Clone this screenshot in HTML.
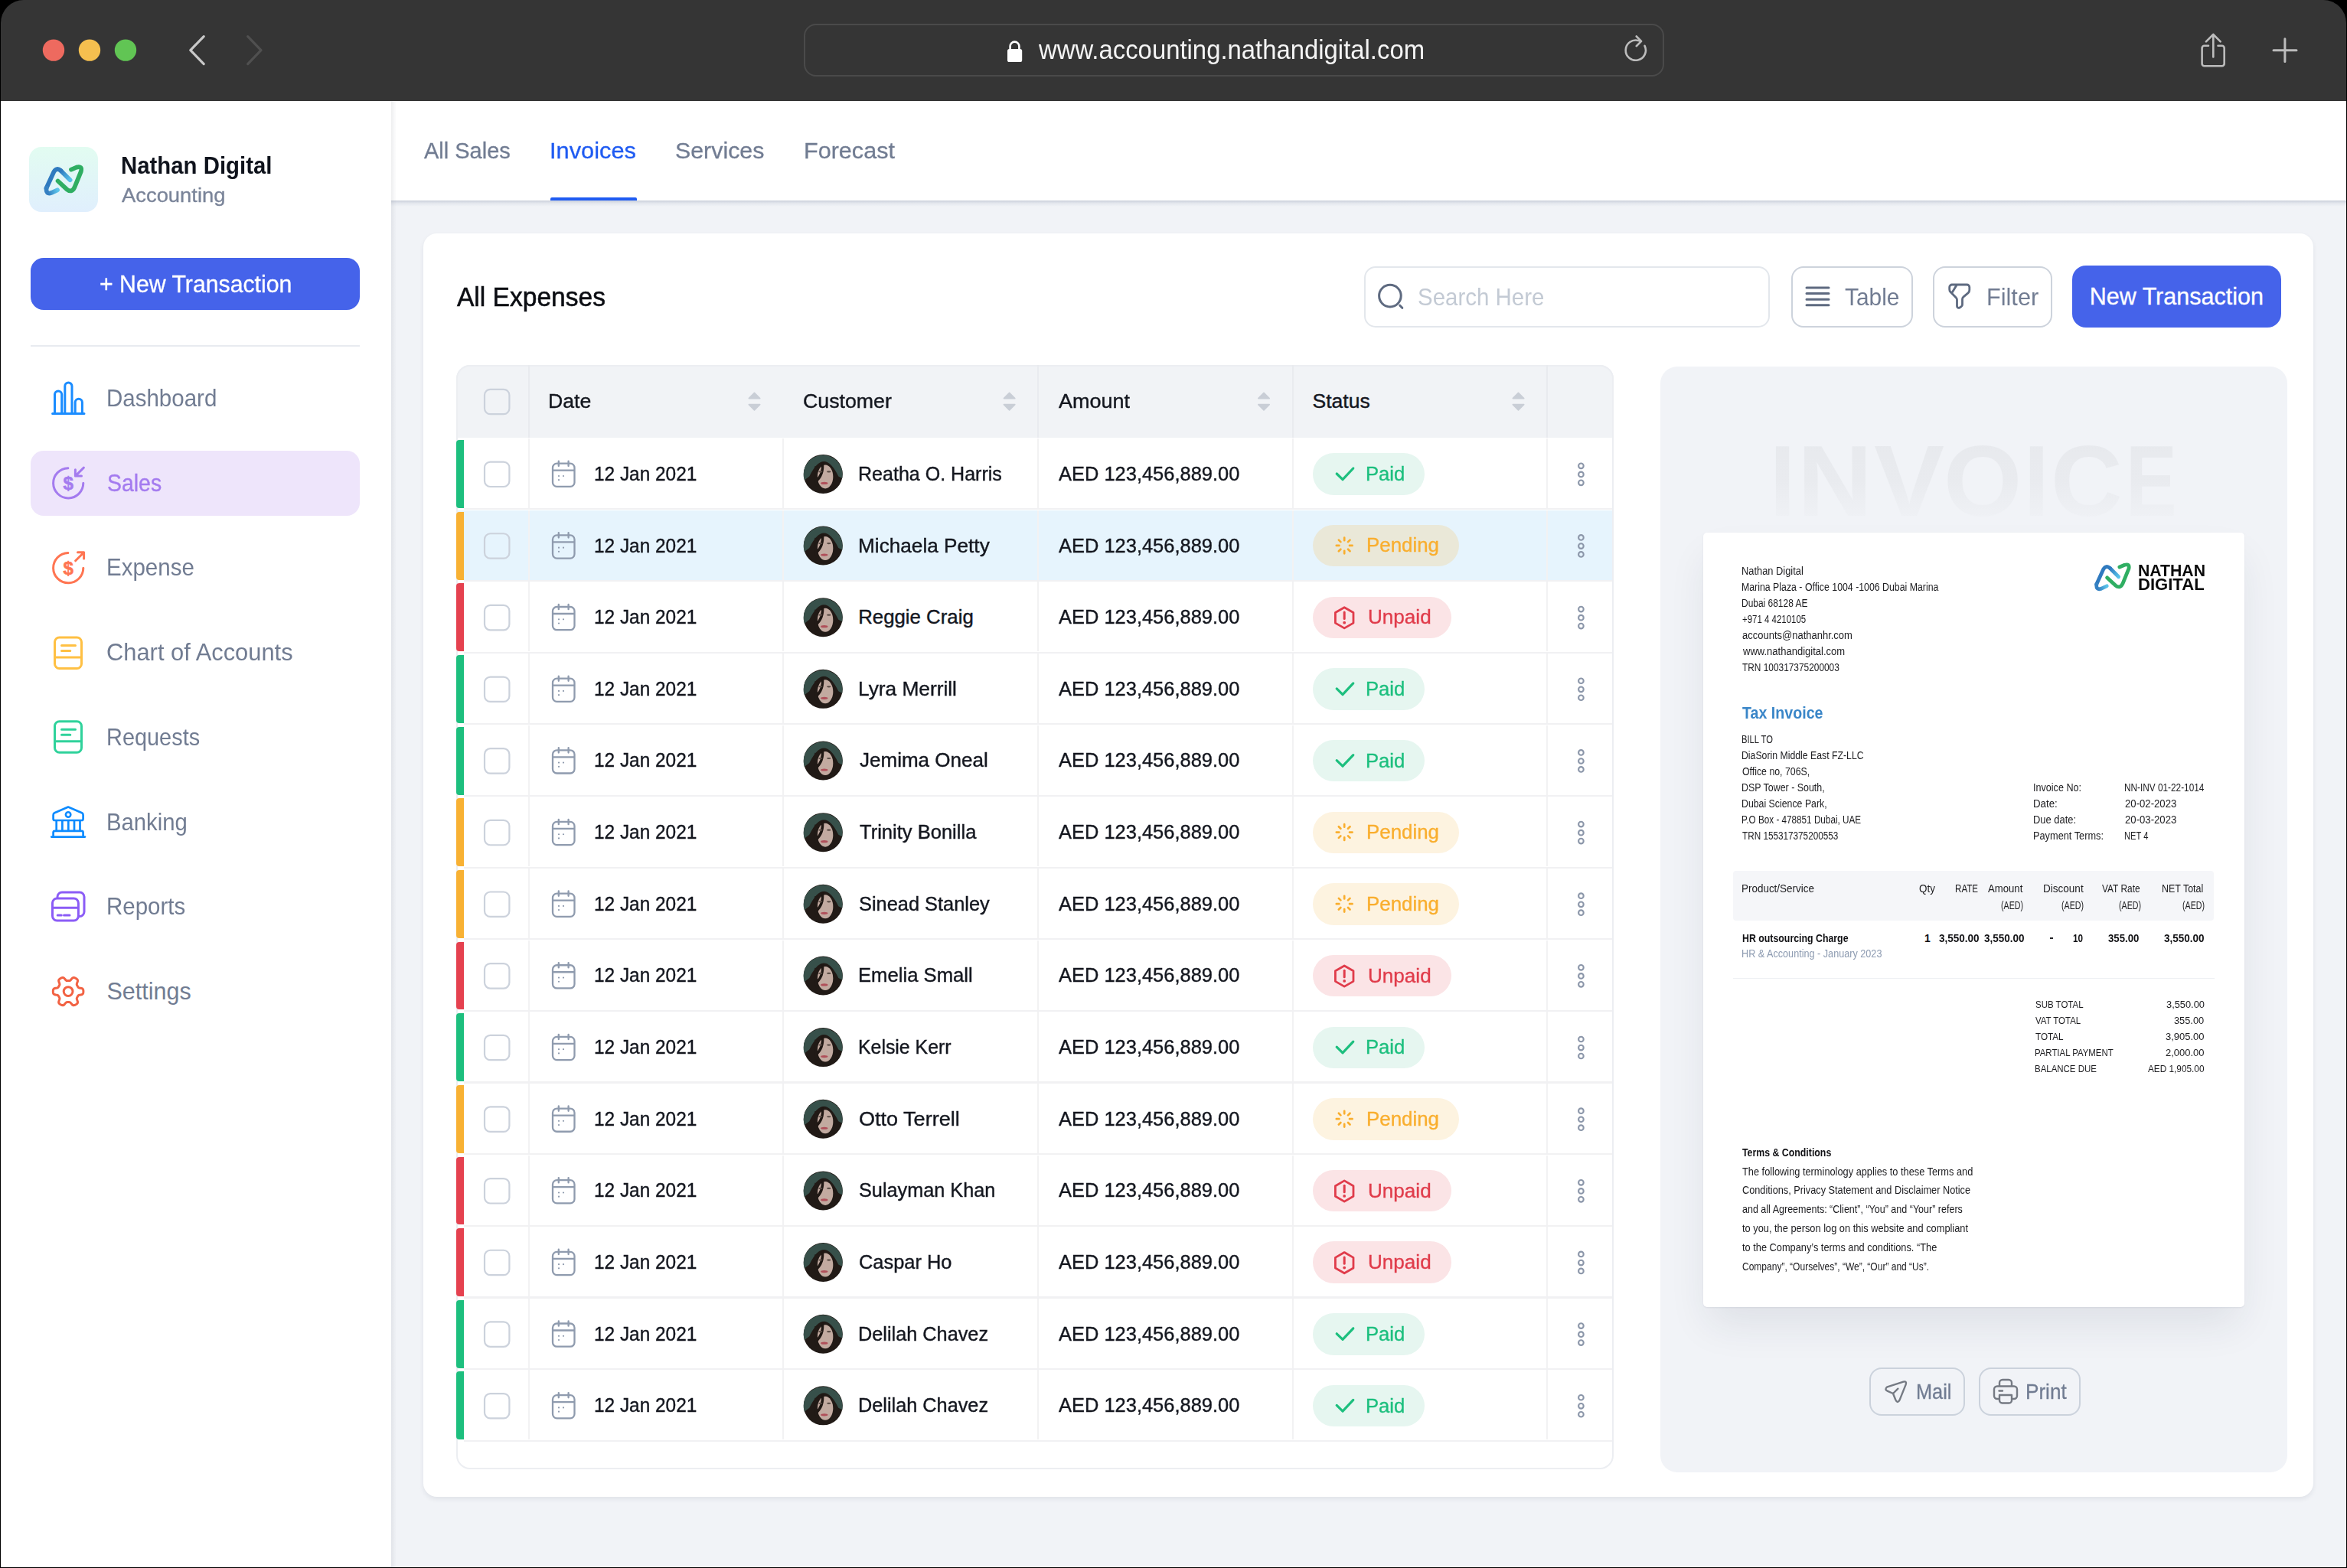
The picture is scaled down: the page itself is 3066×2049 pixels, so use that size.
<!DOCTYPE html><html><head><meta charset="utf-8"><style>
*{margin:0;padding:0;box-sizing:border-box}
html,body{width:3066px;height:2049px;overflow:hidden;background:#000}
body{position:relative;font-family:'Liberation Sans',sans-serif}
.t{position:absolute;white-space:nowrap;line-height:1;transform-origin:0 0}
</style></head><body><div style="position:absolute;left:1.00px;top:0.00px;width:3064.00px;height:132.00px;background:#353535;border-radius:30px 30px 0 0"></div><div style="position:absolute;left:1.00px;top:132.00px;width:3064.00px;height:1916.00px;background:#f1f3f7"></div><div style="position:absolute;left:1050.00px;top:31.00px;width:1124.00px;height:69.00px;border:2px solid #4a4a4a;border-radius:16px"></div><div class="t" style="left:1357.44px;top:46.95px;font-size:35.00px;color:#f4f4f4;font-weight:400;transform:scaleX(0.9387);">www.accounting.nathandigital.com</div><div style="position:absolute;left:1.00px;top:132.00px;width:510.00px;height:1916.00px;background:#fff"></div><div style="position:absolute;left:38.00px;top:192.00px;width:90.00px;height:85.00px;border-radius:16px;background:linear-gradient(#e2fcf1,#e0effd)"></div><div class="t" style="left:157.62px;top:201.00px;font-size:31.30px;color:#0f131c;font-weight:700;transform:scaleX(0.9385);">Nathan Digital</div><div class="t" style="left:158.50px;top:243.07px;font-size:25.80px;color:#7a8499;font-weight:400;transform:scaleX(1.0611);-webkit-text-stroke:0.30px #7a8499;">Accounting</div><div style="position:absolute;left:40.00px;top:337.00px;width:430.00px;height:68.00px;background:#4563ea;border-radius:17px"></div><div class="t" style="left:130.01px;top:355.57px;font-size:30.50px;color:#ffffff;font-weight:400;transform:scaleX(0.9919);-webkit-text-stroke:0.30px #ffffff;">+ New Transaction</div><div style="position:absolute;left:40.00px;top:450.50px;width:430.00px;height:2.00px;background:#e8ebf0"></div><div style="position:absolute;left:40.00px;top:589.00px;width:430.00px;height:85.00px;background:#eee5fb;border-radius:17px"></div><div class="t" style="left:138.57px;top:505.07px;font-size:30.50px;color:#717c92;font-weight:400;transform:scaleX(0.9673);">Dashboard</div><div class="t" style="left:139.57px;top:615.58px;font-size:30.50px;color:#a47bef;font-weight:400;transform:scaleX(0.9328);-webkit-text-stroke:0.35px #a47bef;">Sales</div><div class="t" style="left:138.56px;top:726.08px;font-size:30.50px;color:#717c92;font-weight:400;transform:scaleX(0.9678);">Expense</div><div class="t" style="left:139.49px;top:837.08px;font-size:30.50px;color:#717c92;font-weight:400;transform:scaleX(1.0117);">Chart of Accounts</div><div class="t" style="left:138.60px;top:948.08px;font-size:30.50px;color:#717c92;font-weight:400;transform:scaleX(0.9479);">Requests</div><div class="t" style="left:138.58px;top:1058.58px;font-size:30.50px;color:#717c92;font-weight:400;transform:scaleX(0.9599);">Banking</div><div class="t" style="left:138.57px;top:1169.08px;font-size:30.50px;color:#717c92;font-weight:400;transform:scaleX(0.9661);">Reports</div><div class="t" style="left:139.50px;top:1280.08px;font-size:30.50px;color:#717c92;font-weight:400;">Settings</div><div style="position:absolute;left:511.00px;top:132.00px;width:2554.00px;height:130.00px;background:#fff"></div><div style="position:absolute;left:511.00px;top:262.00px;width:2554.00px;height:8.00px;background:linear-gradient(rgba(150,160,180,0.42),rgba(150,160,180,0.12) 50%,rgba(150,160,180,0))"></div><div style="position:absolute;left:511.00px;top:132.00px;width:7.00px;height:1916.00px;background:linear-gradient(to right,rgba(120,125,140,0.13),rgba(120,125,140,0))"></div><div class="t" style="left:554.00px;top:182.14px;font-size:29.60px;color:#717c92;font-weight:400;transform:scaleX(0.9795);-webkit-text-stroke:0.30px #717c92;">All Sales</div><div class="t" style="left:718.42px;top:182.14px;font-size:29.60px;color:#1f5bf2;font-weight:400;transform:scaleX(1.0400);-webkit-text-stroke:0.30px #1f5bf2;">Invoices</div><div class="t" style="left:882.47px;top:182.14px;font-size:29.60px;color:#717c92;font-weight:400;transform:scaleX(1.0253);-webkit-text-stroke:0.30px #717c92;">Services</div><div class="t" style="left:1049.93px;top:182.14px;font-size:29.60px;color:#717c92;font-weight:400;transform:scaleX(1.0328);-webkit-text-stroke:0.30px #717c92;">Forecast</div><div style="position:absolute;left:719.00px;top:257.50px;width:113.00px;height:4.50px;background:#1f5bf2;border-radius:2px 2px 0 0"></div><div style="position:absolute;left:553.00px;top:305.00px;width:2469.00px;height:1651.00px;background:#fff;border-radius:18px;box-shadow:0 3px 6px rgba(30,40,60,0.08)"></div><div class="t" style="left:597.00px;top:371.38px;font-size:34.50px;color:#0b0d12;font-weight:400;transform:scaleX(0.9723);-webkit-text-stroke:0.55px #0b0d12;">All Expenses</div><div style="position:absolute;left:1782.00px;top:347.50px;width:530.00px;height:80.00px;border:2px solid #e3e7ec;border-radius:15px"></div><div class="t" style="left:1851.63px;top:373.07px;font-size:30.50px;color:#c3cad4;font-weight:400;transform:scaleX(0.9660);">Search Here</div><div style="position:absolute;left:2339.50px;top:347.50px;width:159.00px;height:80.00px;border:2px solid #cdd3dc;border-radius:16px"></div><div class="t" style="left:2410.00px;top:373.07px;font-size:30.50px;color:#717c92;font-weight:400;transform:scaleX(0.9798);">Table</div><div style="position:absolute;left:2525.00px;top:347.50px;width:156.00px;height:80.00px;border:2px solid #cdd3dc;border-radius:16px"></div><div class="t" style="left:2594.99px;top:373.07px;font-size:30.50px;color:#717c92;font-weight:400;transform:scaleX(1.0058);">Filter</div><div style="position:absolute;left:2707.00px;top:347.00px;width:273.00px;height:81.00px;background:#4563ea;border-radius:18px"></div><div class="t" style="left:2729.70px;top:372.07px;font-size:30.50px;color:#fff;font-weight:400;-webkit-text-stroke:0.30px #fff;">New Transaction</div><div style="position:absolute;left:596.00px;top:477.00px;width:1512.00px;height:1443.00px;border:2px solid #eceef2;border-radius:18px;background:#fff;overflow:hidden"></div><div style="position:absolute;left:596.00px;top:477.00px;width:1512.00px;height:95.40px;background:#f1f3f6;border-radius:18px 18px 0 0;border:2px solid #eceef2;border-bottom:none"></div><div class="t" style="left:716.39px;top:511.27px;font-size:26.50px;color:#14171f;font-weight:400;transform:scaleX(1.0049);-webkit-text-stroke:0.40px #14171f;">Date</div><div class="t" style="left:1049.49px;top:511.27px;font-size:26.50px;color:#14171f;font-weight:400;transform:scaleX(1.0084);-webkit-text-stroke:0.40px #14171f;">Customer</div><div class="t" style="left:1382.50px;top:511.27px;font-size:26.50px;color:#14171f;font-weight:400;transform:scaleX(1.0189);-webkit-text-stroke:0.40px #14171f;">Amount</div><div class="t" style="left:1714.50px;top:511.27px;font-size:26.50px;color:#14171f;font-weight:400;-webkit-text-stroke:0.40px #14171f;">Status</div><div style="position:absolute;left:689.50px;top:477.00px;width:2.00px;height:95.40px;background:#e9ebef"></div><div style="position:absolute;left:1354.80px;top:477.00px;width:2.00px;height:95.40px;background:#e9ebef"></div><div style="position:absolute;left:1687.50px;top:477.00px;width:2.00px;height:95.40px;background:#e9ebef"></div><div style="position:absolute;left:2020.00px;top:477.00px;width:2.00px;height:95.40px;background:#e9ebef"></div><div style="position:absolute;left:596.00px;top:575.00px;width:10.30px;height:88.95px;background:#1dbf7e;border-radius:4px 0 0 4px"></div><div style="position:absolute;left:606.00px;top:664.25px;width:1500.00px;height:2.20px;background:#f1f1f3"></div><div style="position:absolute;left:689.50px;top:573.00px;width:2.00px;height:91.05px;background:#f2f2f3"></div><div style="position:absolute;left:1022.00px;top:573.00px;width:2.00px;height:91.05px;background:#f2f2f3"></div><div style="position:absolute;left:1354.80px;top:573.00px;width:2.00px;height:91.05px;background:#f2f2f3"></div><div style="position:absolute;left:1687.50px;top:573.00px;width:2.00px;height:91.05px;background:#f2f2f3"></div><div style="position:absolute;left:2020.00px;top:573.00px;width:2.00px;height:91.05px;background:#f2f2f3"></div><div class="t" style="left:776.45px;top:606.87px;font-size:25.80px;color:#14171f;font-weight:400;transform:scaleX(0.9455);-webkit-text-stroke:0.40px #14171f;">12 Jan 2021</div><div class="t" style="left:1121.26px;top:606.87px;font-size:25.80px;color:#14171f;font-weight:400;transform:scaleX(0.9704);-webkit-text-stroke:0.40px #14171f;">Reatha O. Harris</div><div class="t" style="left:1382.50px;top:606.87px;font-size:25.80px;color:#14171f;font-weight:400;transform:scaleX(0.9867);-webkit-text-stroke:0.40px #14171f;">AED 123,456,889.00</div><div style="position:absolute;left:1715.00px;top:592.30px;width:145.50px;height:54.50px;background:#e6f6f0;border-radius:28px"></div><div class="t" style="left:1784.31px;top:607.07px;font-size:25.80px;color:#1dbf7e;font-weight:400;transform:scaleX(0.9941);-webkit-text-stroke:0.35px #1dbf7e;">Paid</div><div style="position:absolute;left:598.00px;top:666.65px;width:1508.00px;height:91.05px;background:#e6f4fd"></div><div style="position:absolute;left:596.00px;top:668.65px;width:10.30px;height:88.95px;background:#f8b133;border-radius:4px 0 0 4px"></div><div style="position:absolute;left:606.00px;top:757.90px;width:1500.00px;height:2.20px;background:#f1f1f3"></div><div style="position:absolute;left:689.50px;top:666.65px;width:2.00px;height:91.05px;background:#f2f2f3"></div><div style="position:absolute;left:1022.00px;top:666.65px;width:2.00px;height:91.05px;background:#f2f2f3"></div><div style="position:absolute;left:1354.80px;top:666.65px;width:2.00px;height:91.05px;background:#f2f2f3"></div><div style="position:absolute;left:1687.50px;top:666.65px;width:2.00px;height:91.05px;background:#f2f2f3"></div><div style="position:absolute;left:2020.00px;top:666.65px;width:2.00px;height:91.05px;background:#f2f2f3"></div><div class="t" style="left:776.45px;top:700.52px;font-size:25.80px;color:#14171f;font-weight:400;transform:scaleX(0.9455);-webkit-text-stroke:0.40px #14171f;">12 Jan 2021</div><div class="t" style="left:1121.17px;top:700.52px;font-size:25.80px;color:#14171f;font-weight:400;transform:scaleX(1.0150);-webkit-text-stroke:0.40px #14171f;">Michaela Petty</div><div class="t" style="left:1382.50px;top:700.52px;font-size:25.80px;color:#14171f;font-weight:400;transform:scaleX(0.9867);-webkit-text-stroke:0.40px #14171f;">AED 123,456,889.00</div><div style="position:absolute;left:1715.00px;top:685.95px;width:190.50px;height:54.50px;background:#eae8d8;border-radius:28px"></div><div class="t" style="left:1784.89px;top:700.32px;font-size:25.80px;color:#f9ae2e;font-weight:400;transform:scaleX(1.0030);-webkit-text-stroke:0.35px #f9ae2e;">Pending</div><div style="position:absolute;left:596.00px;top:762.30px;width:10.30px;height:88.95px;background:#e5414f;border-radius:4px 0 0 4px"></div><div style="position:absolute;left:606.00px;top:851.55px;width:1500.00px;height:2.20px;background:#f1f1f3"></div><div style="position:absolute;left:689.50px;top:760.30px;width:2.00px;height:91.05px;background:#f2f2f3"></div><div style="position:absolute;left:1022.00px;top:760.30px;width:2.00px;height:91.05px;background:#f2f2f3"></div><div style="position:absolute;left:1354.80px;top:760.30px;width:2.00px;height:91.05px;background:#f2f2f3"></div><div style="position:absolute;left:1687.50px;top:760.30px;width:2.00px;height:91.05px;background:#f2f2f3"></div><div style="position:absolute;left:2020.00px;top:760.30px;width:2.00px;height:91.05px;background:#f2f2f3"></div><div class="t" style="left:776.45px;top:794.17px;font-size:25.80px;color:#14171f;font-weight:400;transform:scaleX(0.9455);-webkit-text-stroke:0.40px #14171f;">12 Jan 2021</div><div class="t" style="left:1121.20px;top:794.17px;font-size:25.80px;color:#14171f;font-weight:400;-webkit-text-stroke:0.40px #14171f;">Reggie Craig</div><div class="t" style="left:1382.50px;top:794.17px;font-size:25.80px;color:#14171f;font-weight:400;transform:scaleX(0.9867);-webkit-text-stroke:0.40px #14171f;">AED 123,456,889.00</div><div style="position:absolute;left:1715.00px;top:779.60px;width:181.00px;height:54.50px;background:#fbe4e6;border-radius:28px"></div><div class="t" style="left:1786.69px;top:794.37px;font-size:25.80px;color:#e03c4b;font-weight:400;transform:scaleX(1.0113);-webkit-text-stroke:0.35px #e03c4b;">Unpaid</div><div style="position:absolute;left:596.00px;top:855.95px;width:10.30px;height:88.95px;background:#1dbf7e;border-radius:4px 0 0 4px"></div><div style="position:absolute;left:606.00px;top:945.20px;width:1500.00px;height:2.20px;background:#f1f1f3"></div><div style="position:absolute;left:689.50px;top:853.95px;width:2.00px;height:91.05px;background:#f2f2f3"></div><div style="position:absolute;left:1022.00px;top:853.95px;width:2.00px;height:91.05px;background:#f2f2f3"></div><div style="position:absolute;left:1354.80px;top:853.95px;width:2.00px;height:91.05px;background:#f2f2f3"></div><div style="position:absolute;left:1687.50px;top:853.95px;width:2.00px;height:91.05px;background:#f2f2f3"></div><div style="position:absolute;left:2020.00px;top:853.95px;width:2.00px;height:91.05px;background:#f2f2f3"></div><div class="t" style="left:776.45px;top:887.82px;font-size:25.80px;color:#14171f;font-weight:400;transform:scaleX(0.9455);-webkit-text-stroke:0.40px #14171f;">12 Jan 2021</div><div class="t" style="left:1121.16px;top:887.82px;font-size:25.80px;color:#14171f;font-weight:400;transform:scaleX(1.0181);-webkit-text-stroke:0.40px #14171f;">Lyra Merrill</div><div class="t" style="left:1382.50px;top:887.82px;font-size:25.80px;color:#14171f;font-weight:400;transform:scaleX(0.9867);-webkit-text-stroke:0.40px #14171f;">AED 123,456,889.00</div><div style="position:absolute;left:1715.00px;top:873.25px;width:145.50px;height:54.50px;background:#e6f6f0;border-radius:28px"></div><div class="t" style="left:1784.31px;top:888.02px;font-size:25.80px;color:#1dbf7e;font-weight:400;transform:scaleX(0.9941);-webkit-text-stroke:0.35px #1dbf7e;">Paid</div><div style="position:absolute;left:596.00px;top:949.60px;width:10.30px;height:88.95px;background:#1dbf7e;border-radius:4px 0 0 4px"></div><div style="position:absolute;left:606.00px;top:1038.85px;width:1500.00px;height:2.20px;background:#f1f1f3"></div><div style="position:absolute;left:689.50px;top:947.60px;width:2.00px;height:91.05px;background:#f2f2f3"></div><div style="position:absolute;left:1022.00px;top:947.60px;width:2.00px;height:91.05px;background:#f2f2f3"></div><div style="position:absolute;left:1354.80px;top:947.60px;width:2.00px;height:91.05px;background:#f2f2f3"></div><div style="position:absolute;left:1687.50px;top:947.60px;width:2.00px;height:91.05px;background:#f2f2f3"></div><div style="position:absolute;left:2020.00px;top:947.60px;width:2.00px;height:91.05px;background:#f2f2f3"></div><div class="t" style="left:776.45px;top:981.47px;font-size:25.80px;color:#14171f;font-weight:400;transform:scaleX(0.9455);-webkit-text-stroke:0.40px #14171f;">12 Jan 2021</div><div class="t" style="left:1123.20px;top:981.47px;font-size:25.80px;color:#14171f;font-weight:400;transform:scaleX(1.0087);-webkit-text-stroke:0.40px #14171f;">Jemima Oneal</div><div class="t" style="left:1382.50px;top:981.47px;font-size:25.80px;color:#14171f;font-weight:400;transform:scaleX(0.9867);-webkit-text-stroke:0.40px #14171f;">AED 123,456,889.00</div><div style="position:absolute;left:1715.00px;top:966.90px;width:145.50px;height:54.50px;background:#e6f6f0;border-radius:28px"></div><div class="t" style="left:1784.31px;top:981.67px;font-size:25.80px;color:#1dbf7e;font-weight:400;transform:scaleX(0.9941);-webkit-text-stroke:0.35px #1dbf7e;">Paid</div><div style="position:absolute;left:596.00px;top:1043.25px;width:10.30px;height:88.95px;background:#f8b133;border-radius:4px 0 0 4px"></div><div style="position:absolute;left:606.00px;top:1132.50px;width:1500.00px;height:2.20px;background:#f1f1f3"></div><div style="position:absolute;left:689.50px;top:1041.25px;width:2.00px;height:91.05px;background:#f2f2f3"></div><div style="position:absolute;left:1022.00px;top:1041.25px;width:2.00px;height:91.05px;background:#f2f2f3"></div><div style="position:absolute;left:1354.80px;top:1041.25px;width:2.00px;height:91.05px;background:#f2f2f3"></div><div style="position:absolute;left:1687.50px;top:1041.25px;width:2.00px;height:91.05px;background:#f2f2f3"></div><div style="position:absolute;left:2020.00px;top:1041.25px;width:2.00px;height:91.05px;background:#f2f2f3"></div><div class="t" style="left:776.45px;top:1075.12px;font-size:25.80px;color:#14171f;font-weight:400;transform:scaleX(0.9455);-webkit-text-stroke:0.40px #14171f;">12 Jan 2021</div><div class="t" style="left:1123.20px;top:1075.12px;font-size:25.80px;color:#14171f;font-weight:400;transform:scaleX(0.9901);-webkit-text-stroke:0.40px #14171f;">Trinity Bonilla</div><div class="t" style="left:1382.50px;top:1075.12px;font-size:25.80px;color:#14171f;font-weight:400;transform:scaleX(0.9867);-webkit-text-stroke:0.40px #14171f;">AED 123,456,889.00</div><div style="position:absolute;left:1715.00px;top:1060.55px;width:190.50px;height:54.50px;background:#fdf3e0;border-radius:28px"></div><div class="t" style="left:1784.89px;top:1074.92px;font-size:25.80px;color:#f9ae2e;font-weight:400;transform:scaleX(1.0030);-webkit-text-stroke:0.35px #f9ae2e;">Pending</div><div style="position:absolute;left:596.00px;top:1136.90px;width:10.30px;height:88.95px;background:#f8b133;border-radius:4px 0 0 4px"></div><div style="position:absolute;left:606.00px;top:1226.15px;width:1500.00px;height:2.20px;background:#f1f1f3"></div><div style="position:absolute;left:689.50px;top:1134.90px;width:2.00px;height:91.05px;background:#f2f2f3"></div><div style="position:absolute;left:1022.00px;top:1134.90px;width:2.00px;height:91.05px;background:#f2f2f3"></div><div style="position:absolute;left:1354.80px;top:1134.90px;width:2.00px;height:91.05px;background:#f2f2f3"></div><div style="position:absolute;left:1687.50px;top:1134.90px;width:2.00px;height:91.05px;background:#f2f2f3"></div><div style="position:absolute;left:2020.00px;top:1134.90px;width:2.00px;height:91.05px;background:#f2f2f3"></div><div class="t" style="left:776.45px;top:1168.77px;font-size:25.80px;color:#14171f;font-weight:400;transform:scaleX(0.9455);-webkit-text-stroke:0.40px #14171f;">12 Jan 2021</div><div class="t" style="left:1122.22px;top:1168.77px;font-size:25.80px;color:#14171f;font-weight:400;transform:scaleX(0.9836);-webkit-text-stroke:0.40px #14171f;">Sinead Stanley</div><div class="t" style="left:1382.50px;top:1168.77px;font-size:25.80px;color:#14171f;font-weight:400;transform:scaleX(0.9867);-webkit-text-stroke:0.40px #14171f;">AED 123,456,889.00</div><div style="position:absolute;left:1715.00px;top:1154.20px;width:190.50px;height:54.50px;background:#fdf3e0;border-radius:28px"></div><div class="t" style="left:1784.89px;top:1168.57px;font-size:25.80px;color:#f9ae2e;font-weight:400;transform:scaleX(1.0030);-webkit-text-stroke:0.35px #f9ae2e;">Pending</div><div style="position:absolute;left:596.00px;top:1230.55px;width:10.30px;height:88.95px;background:#e5414f;border-radius:4px 0 0 4px"></div><div style="position:absolute;left:606.00px;top:1319.80px;width:1500.00px;height:2.20px;background:#f1f1f3"></div><div style="position:absolute;left:689.50px;top:1228.55px;width:2.00px;height:91.05px;background:#f2f2f3"></div><div style="position:absolute;left:1022.00px;top:1228.55px;width:2.00px;height:91.05px;background:#f2f2f3"></div><div style="position:absolute;left:1354.80px;top:1228.55px;width:2.00px;height:91.05px;background:#f2f2f3"></div><div style="position:absolute;left:1687.50px;top:1228.55px;width:2.00px;height:91.05px;background:#f2f2f3"></div><div style="position:absolute;left:2020.00px;top:1228.55px;width:2.00px;height:91.05px;background:#f2f2f3"></div><div class="t" style="left:776.45px;top:1262.42px;font-size:25.80px;color:#14171f;font-weight:400;transform:scaleX(0.9455);-webkit-text-stroke:0.40px #14171f;">12 Jan 2021</div><div class="t" style="left:1121.21px;top:1262.42px;font-size:25.80px;color:#14171f;font-weight:400;transform:scaleX(0.9946);-webkit-text-stroke:0.40px #14171f;">Emelia Small</div><div class="t" style="left:1382.50px;top:1262.42px;font-size:25.80px;color:#14171f;font-weight:400;transform:scaleX(0.9867);-webkit-text-stroke:0.40px #14171f;">AED 123,456,889.00</div><div style="position:absolute;left:1715.00px;top:1247.85px;width:181.00px;height:54.50px;background:#fbe4e6;border-radius:28px"></div><div class="t" style="left:1786.69px;top:1262.62px;font-size:25.80px;color:#e03c4b;font-weight:400;transform:scaleX(1.0113);-webkit-text-stroke:0.35px #e03c4b;">Unpaid</div><div style="position:absolute;left:596.00px;top:1324.20px;width:10.30px;height:88.95px;background:#1dbf7e;border-radius:4px 0 0 4px"></div><div style="position:absolute;left:606.00px;top:1413.45px;width:1500.00px;height:2.20px;background:#f1f1f3"></div><div style="position:absolute;left:689.50px;top:1322.20px;width:2.00px;height:91.05px;background:#f2f2f3"></div><div style="position:absolute;left:1022.00px;top:1322.20px;width:2.00px;height:91.05px;background:#f2f2f3"></div><div style="position:absolute;left:1354.80px;top:1322.20px;width:2.00px;height:91.05px;background:#f2f2f3"></div><div style="position:absolute;left:1687.50px;top:1322.20px;width:2.00px;height:91.05px;background:#f2f2f3"></div><div style="position:absolute;left:2020.00px;top:1322.20px;width:2.00px;height:91.05px;background:#f2f2f3"></div><div class="t" style="left:776.45px;top:1356.07px;font-size:25.80px;color:#14171f;font-weight:400;transform:scaleX(0.9455);-webkit-text-stroke:0.40px #14171f;">12 Jan 2021</div><div class="t" style="left:1121.27px;top:1356.07px;font-size:25.80px;color:#14171f;font-weight:400;transform:scaleX(0.9633);-webkit-text-stroke:0.40px #14171f;">Kelsie Kerr</div><div class="t" style="left:1382.50px;top:1356.07px;font-size:25.80px;color:#14171f;font-weight:400;transform:scaleX(0.9867);-webkit-text-stroke:0.40px #14171f;">AED 123,456,889.00</div><div style="position:absolute;left:1715.00px;top:1341.50px;width:145.50px;height:54.50px;background:#e6f6f0;border-radius:28px"></div><div class="t" style="left:1784.31px;top:1356.27px;font-size:25.80px;color:#1dbf7e;font-weight:400;transform:scaleX(0.9941);-webkit-text-stroke:0.35px #1dbf7e;">Paid</div><div style="position:absolute;left:596.00px;top:1417.85px;width:10.30px;height:88.95px;background:#f8b133;border-radius:4px 0 0 4px"></div><div style="position:absolute;left:606.00px;top:1507.10px;width:1500.00px;height:2.20px;background:#f1f1f3"></div><div style="position:absolute;left:689.50px;top:1415.85px;width:2.00px;height:91.05px;background:#f2f2f3"></div><div style="position:absolute;left:1022.00px;top:1415.85px;width:2.00px;height:91.05px;background:#f2f2f3"></div><div style="position:absolute;left:1354.80px;top:1415.85px;width:2.00px;height:91.05px;background:#f2f2f3"></div><div style="position:absolute;left:1687.50px;top:1415.85px;width:2.00px;height:91.05px;background:#f2f2f3"></div><div style="position:absolute;left:2020.00px;top:1415.85px;width:2.00px;height:91.05px;background:#f2f2f3"></div><div class="t" style="left:776.45px;top:1449.72px;font-size:25.80px;color:#14171f;font-weight:400;transform:scaleX(0.9455);-webkit-text-stroke:0.40px #14171f;">12 Jan 2021</div><div class="t" style="left:1122.15px;top:1449.72px;font-size:25.80px;color:#14171f;font-weight:400;transform:scaleX(1.0477);-webkit-text-stroke:0.40px #14171f;">Otto Terrell</div><div class="t" style="left:1382.50px;top:1449.72px;font-size:25.80px;color:#14171f;font-weight:400;transform:scaleX(0.9867);-webkit-text-stroke:0.40px #14171f;">AED 123,456,889.00</div><div style="position:absolute;left:1715.00px;top:1435.15px;width:190.50px;height:54.50px;background:#fdf3e0;border-radius:28px"></div><div class="t" style="left:1784.89px;top:1449.52px;font-size:25.80px;color:#f9ae2e;font-weight:400;transform:scaleX(1.0030);-webkit-text-stroke:0.35px #f9ae2e;">Pending</div><div style="position:absolute;left:596.00px;top:1511.50px;width:10.30px;height:88.95px;background:#e5414f;border-radius:4px 0 0 4px"></div><div style="position:absolute;left:606.00px;top:1600.75px;width:1500.00px;height:2.20px;background:#f1f1f3"></div><div style="position:absolute;left:689.50px;top:1509.50px;width:2.00px;height:91.05px;background:#f2f2f3"></div><div style="position:absolute;left:1022.00px;top:1509.50px;width:2.00px;height:91.05px;background:#f2f2f3"></div><div style="position:absolute;left:1354.80px;top:1509.50px;width:2.00px;height:91.05px;background:#f2f2f3"></div><div style="position:absolute;left:1687.50px;top:1509.50px;width:2.00px;height:91.05px;background:#f2f2f3"></div><div style="position:absolute;left:2020.00px;top:1509.50px;width:2.00px;height:91.05px;background:#f2f2f3"></div><div class="t" style="left:776.45px;top:1543.37px;font-size:25.80px;color:#14171f;font-weight:400;transform:scaleX(0.9455);-webkit-text-stroke:0.40px #14171f;">12 Jan 2021</div><div class="t" style="left:1122.22px;top:1543.37px;font-size:25.80px;color:#14171f;font-weight:400;transform:scaleX(0.9790);-webkit-text-stroke:0.40px #14171f;">Sulayman Khan</div><div class="t" style="left:1382.50px;top:1543.37px;font-size:25.80px;color:#14171f;font-weight:400;transform:scaleX(0.9867);-webkit-text-stroke:0.40px #14171f;">AED 123,456,889.00</div><div style="position:absolute;left:1715.00px;top:1528.80px;width:181.00px;height:54.50px;background:#fbe4e6;border-radius:28px"></div><div class="t" style="left:1786.69px;top:1543.57px;font-size:25.80px;color:#e03c4b;font-weight:400;transform:scaleX(1.0113);-webkit-text-stroke:0.35px #e03c4b;">Unpaid</div><div style="position:absolute;left:596.00px;top:1605.15px;width:10.30px;height:88.95px;background:#e5414f;border-radius:4px 0 0 4px"></div><div style="position:absolute;left:606.00px;top:1694.40px;width:1500.00px;height:2.20px;background:#f1f1f3"></div><div style="position:absolute;left:689.50px;top:1603.15px;width:2.00px;height:91.05px;background:#f2f2f3"></div><div style="position:absolute;left:1022.00px;top:1603.15px;width:2.00px;height:91.05px;background:#f2f2f3"></div><div style="position:absolute;left:1354.80px;top:1603.15px;width:2.00px;height:91.05px;background:#f2f2f3"></div><div style="position:absolute;left:1687.50px;top:1603.15px;width:2.00px;height:91.05px;background:#f2f2f3"></div><div style="position:absolute;left:2020.00px;top:1603.15px;width:2.00px;height:91.05px;background:#f2f2f3"></div><div class="t" style="left:776.45px;top:1637.02px;font-size:25.80px;color:#14171f;font-weight:400;transform:scaleX(0.9455);-webkit-text-stroke:0.40px #14171f;">12 Jan 2021</div><div class="t" style="left:1122.22px;top:1637.02px;font-size:25.80px;color:#14171f;font-weight:400;transform:scaleX(0.9840);-webkit-text-stroke:0.40px #14171f;">Caspar Ho</div><div class="t" style="left:1382.50px;top:1637.02px;font-size:25.80px;color:#14171f;font-weight:400;transform:scaleX(0.9867);-webkit-text-stroke:0.40px #14171f;">AED 123,456,889.00</div><div style="position:absolute;left:1715.00px;top:1622.45px;width:181.00px;height:54.50px;background:#fbe4e6;border-radius:28px"></div><div class="t" style="left:1786.69px;top:1637.22px;font-size:25.80px;color:#e03c4b;font-weight:400;transform:scaleX(1.0113);-webkit-text-stroke:0.35px #e03c4b;">Unpaid</div><div style="position:absolute;left:596.00px;top:1698.80px;width:10.30px;height:88.95px;background:#1dbf7e;border-radius:4px 0 0 4px"></div><div style="position:absolute;left:606.00px;top:1788.05px;width:1500.00px;height:2.20px;background:#f1f1f3"></div><div style="position:absolute;left:689.50px;top:1696.80px;width:2.00px;height:91.05px;background:#f2f2f3"></div><div style="position:absolute;left:1022.00px;top:1696.80px;width:2.00px;height:91.05px;background:#f2f2f3"></div><div style="position:absolute;left:1354.80px;top:1696.80px;width:2.00px;height:91.05px;background:#f2f2f3"></div><div style="position:absolute;left:1687.50px;top:1696.80px;width:2.00px;height:91.05px;background:#f2f2f3"></div><div style="position:absolute;left:2020.00px;top:1696.80px;width:2.00px;height:91.05px;background:#f2f2f3"></div><div class="t" style="left:776.45px;top:1730.67px;font-size:25.80px;color:#14171f;font-weight:400;transform:scaleX(0.9455);-webkit-text-stroke:0.40px #14171f;">12 Jan 2021</div><div class="t" style="left:1121.24px;top:1730.67px;font-size:25.80px;color:#14171f;font-weight:400;transform:scaleX(0.9801);-webkit-text-stroke:0.40px #14171f;">Delilah Chavez</div><div class="t" style="left:1382.50px;top:1730.67px;font-size:25.80px;color:#14171f;font-weight:400;transform:scaleX(0.9867);-webkit-text-stroke:0.40px #14171f;">AED 123,456,889.00</div><div style="position:absolute;left:1715.00px;top:1716.10px;width:145.50px;height:54.50px;background:#e6f6f0;border-radius:28px"></div><div class="t" style="left:1784.31px;top:1730.87px;font-size:25.80px;color:#1dbf7e;font-weight:400;transform:scaleX(0.9941);-webkit-text-stroke:0.35px #1dbf7e;">Paid</div><div style="position:absolute;left:596.00px;top:1792.45px;width:10.30px;height:88.95px;background:#1dbf7e;border-radius:4px 0 0 4px"></div><div style="position:absolute;left:606.00px;top:1881.70px;width:1500.00px;height:2.20px;background:#f1f1f3"></div><div style="position:absolute;left:689.50px;top:1790.45px;width:2.00px;height:91.05px;background:#f2f2f3"></div><div style="position:absolute;left:1022.00px;top:1790.45px;width:2.00px;height:91.05px;background:#f2f2f3"></div><div style="position:absolute;left:1354.80px;top:1790.45px;width:2.00px;height:91.05px;background:#f2f2f3"></div><div style="position:absolute;left:1687.50px;top:1790.45px;width:2.00px;height:91.05px;background:#f2f2f3"></div><div style="position:absolute;left:2020.00px;top:1790.45px;width:2.00px;height:91.05px;background:#f2f2f3"></div><div class="t" style="left:776.45px;top:1824.32px;font-size:25.80px;color:#14171f;font-weight:400;transform:scaleX(0.9455);-webkit-text-stroke:0.40px #14171f;">12 Jan 2021</div><div class="t" style="left:1121.24px;top:1824.32px;font-size:25.80px;color:#14171f;font-weight:400;transform:scaleX(0.9801);-webkit-text-stroke:0.40px #14171f;">Delilah Chavez</div><div class="t" style="left:1382.50px;top:1824.32px;font-size:25.80px;color:#14171f;font-weight:400;transform:scaleX(0.9867);-webkit-text-stroke:0.40px #14171f;">AED 123,456,889.00</div><div style="position:absolute;left:1715.00px;top:1809.75px;width:145.50px;height:54.50px;background:#e6f6f0;border-radius:28px"></div><div class="t" style="left:1784.31px;top:1824.52px;font-size:25.80px;color:#1dbf7e;font-weight:400;transform:scaleX(0.9941);-webkit-text-stroke:0.35px #1dbf7e;">Paid</div><div style="position:absolute;left:2169.00px;top:479.00px;width:819.00px;height:1445.00px;background:#f1f3f7;border-radius:22px"></div><div class="t" style="left:2311.70px;top:562.38px;font-size:132.50px;color:#e6e8ec;font-weight:700;transform:scaleX(0.9000);background:linear-gradient(#e7e9ed 0%,#e9ebef 50%,#f0f2f6 92%);-webkit-background-clip:text;background-clip:text;-webkit-text-fill-color:transparent;">I</div><div class="t" style="left:2348.11px;top:562.38px;font-size:132.50px;color:#e6e8ec;font-weight:700;transform:scaleX(1.0241);background:linear-gradient(#e7e9ed 0%,#e9ebef 50%,#f0f2f6 92%);-webkit-background-clip:text;background-clip:text;-webkit-text-fill-color:transparent;">N</div><div class="t" style="left:2448.10px;top:562.38px;font-size:132.50px;color:#e6e8ec;font-weight:700;transform:scaleX(1.0432);background:linear-gradient(#e7e9ed 0%,#e9ebef 50%,#f0f2f6 92%);-webkit-background-clip:text;background-clip:text;-webkit-text-fill-color:transparent;">V</div><div class="t" style="left:2539.04px;top:562.38px;font-size:132.50px;color:#e6e8ec;font-weight:700;transform:scaleX(0.9925);background:linear-gradient(#e7e9ed 0%,#e9ebef 50%,#f0f2f6 92%);-webkit-background-clip:text;background-clip:text;-webkit-text-fill-color:transparent;">O</div><div class="t" style="left:2644.32px;top:562.38px;font-size:132.50px;color:#e6e8ec;font-weight:700;transform:scaleX(0.8850);background:linear-gradient(#e7e9ed 0%,#e9ebef 50%,#f0f2f6 92%);-webkit-background-clip:text;background-clip:text;-webkit-text-fill-color:transparent;">I</div><div class="t" style="left:2678.80px;top:562.38px;font-size:132.50px;color:#e6e8ec;font-weight:700;transform:scaleX(0.9795);background:linear-gradient(#e7e9ed 0%,#e9ebef 50%,#f0f2f6 92%);-webkit-background-clip:text;background-clip:text;-webkit-text-fill-color:transparent;">C</div><div class="t" style="left:2776.75px;top:562.38px;font-size:132.50px;color:#e6e8ec;font-weight:700;transform:scaleX(0.7566);background:linear-gradient(#e7e9ed 0%,#e9ebef 50%,#f0f2f6 92%);-webkit-background-clip:text;background-clip:text;-webkit-text-fill-color:transparent;">E</div><div style="position:absolute;left:2225.00px;top:695.50px;width:707.00px;height:1012.50px;background:#fff;border-radius:5px;box-shadow:0 1px 2px rgba(30,40,80,0.08),0 28px 50px -6px rgba(30,40,70,0.09)"></div><div class="t" style="left:2275.08px;top:738.70px;font-size:14.00px;color:#1c1c1f;font-weight:400;transform:scaleX(0.9191);">Nathan Digital</div><div class="t" style="left:2275.12px;top:759.60px;font-size:14.00px;color:#1c1c1f;font-weight:400;transform:scaleX(0.8805);">Marina Plaza - Office 1004 -1006 Dubai Marina</div><div class="t" style="left:2275.15px;top:780.70px;font-size:14.00px;color:#1c1c1f;font-weight:400;transform:scaleX(0.8536);">Dubai 68128 AE</div><div class="t" style="left:2276.00px;top:802.10px;font-size:14.00px;color:#1c1c1f;font-weight:400;transform:scaleX(0.8191);">+971 4 4210105</div><div class="t" style="left:2276.00px;top:823.10px;font-size:14.00px;color:#1c1c1f;font-weight:400;transform:scaleX(0.9280);">accounts@nathanhr.com</div><div class="t" style="left:2276.93px;top:843.90px;font-size:14.00px;color:#1c1c1f;font-weight:400;transform:scaleX(0.9295);">www.nathandigital.com</div><div class="t" style="left:2276.00px;top:865.10px;font-size:14.00px;color:#1c1c1f;font-weight:400;transform:scaleX(0.8485);">TRN 100317375200003</div><div class="t" style="left:2792.73px;top:735.47px;font-size:21.80px;color:#0a0a0a;font-weight:700;transform:scaleX(0.9734);">NATHAN</div><div class="t" style="left:2792.69px;top:752.87px;font-size:21.80px;color:#0a0a0a;font-weight:700;transform:scaleX(1.0125);">DIGITAL</div><div class="t" style="left:2276.00px;top:921.73px;font-size:21.50px;color:#3a86c8;font-weight:700;transform:scaleX(0.9130);">Tax Invoice</div><div class="t" style="left:2275.20px;top:959.00px;font-size:14.00px;color:#1c1c1f;font-weight:400;transform:scaleX(0.8002);">BILL TO</div><div class="t" style="left:2275.12px;top:979.80px;font-size:14.00px;color:#1c1c1f;font-weight:400;transform:scaleX(0.8765);">DiaSorin Middle East FZ-LLC</div><div class="t" style="left:2276.00px;top:1001.00px;font-size:14.00px;color:#1c1c1f;font-weight:400;transform:scaleX(0.8806);">Office no, 706S,</div><div class="t" style="left:2275.11px;top:1021.80px;font-size:14.00px;color:#1c1c1f;font-weight:400;transform:scaleX(0.8873);">DSP Tower - South,</div><div class="t" style="left:2275.12px;top:1043.00px;font-size:14.00px;color:#1c1c1f;font-weight:400;transform:scaleX(0.8803);">Dubai Science Park,</div><div class="t" style="left:2275.16px;top:1064.10px;font-size:14.00px;color:#1c1c1f;font-weight:400;transform:scaleX(0.8370);">P.O Box - 478851 Dubai, UAE</div><div class="t" style="left:2276.00px;top:1085.10px;font-size:14.00px;color:#1c1c1f;font-weight:400;transform:scaleX(0.8385);">TRN 155317375200553</div><div class="t" style="left:2656.10px;top:1021.80px;font-size:14.00px;color:#1c1c1f;font-weight:400;transform:scaleX(0.8996);">Invoice No:</div><div class="t" style="left:2774.96px;top:1021.80px;font-size:14.00px;color:#1c1c1f;font-weight:400;transform:scaleX(0.8435);">NN-INV 01-22-1014</div><div class="t" style="left:2656.05px;top:1043.00px;font-size:14.00px;color:#1c1c1f;font-weight:400;transform:scaleX(0.9502);">Date:</div><div class="t" style="left:2775.80px;top:1043.00px;font-size:14.00px;color:#1c1c1f;font-weight:400;transform:scaleX(0.9398);">20-02-2023</div><div class="t" style="left:2656.08px;top:1064.10px;font-size:14.00px;color:#1c1c1f;font-weight:400;transform:scaleX(0.9232);">Due date:</div><div class="t" style="left:2775.80px;top:1064.10px;font-size:14.00px;color:#1c1c1f;font-weight:400;transform:scaleX(0.9398);">20-03-2023</div><div class="t" style="left:2656.09px;top:1085.10px;font-size:14.00px;color:#1c1c1f;font-weight:400;transform:scaleX(0.9119);">Payment Terms:</div><div class="t" style="left:2775.00px;top:1085.10px;font-size:14.00px;color:#1c1c1f;font-weight:400;transform:scaleX(0.7971);">NET 4</div><div style="position:absolute;left:2264.00px;top:1138.40px;width:628.00px;height:65.00px;background:#f5f6f9;border-radius:4px"></div><div class="t" style="left:2275.04px;top:1154.10px;font-size:14.00px;color:#1c1c1f;font-weight:400;transform:scaleX(0.9609);">Product/Service</div><div class="t" style="left:2506.80px;top:1154.10px;font-size:14.00px;color:#1c1c1f;font-weight:400;transform:scaleX(0.9596);">Qty</div><div class="t" style="left:2553.67px;top:1154.10px;font-size:14.00px;color:#1c1c1f;font-weight:400;transform:scaleX(0.8295);">RATE</div><div class="t" style="left:2597.30px;top:1154.10px;font-size:14.00px;color:#1c1c1f;font-weight:400;transform:scaleX(0.9388);">Amount</div><div class="t" style="left:2669.03px;top:1154.10px;font-size:14.00px;color:#1c1c1f;font-weight:400;transform:scaleX(0.9668);">Discount</div><div class="t" style="left:2746.00px;top:1154.10px;font-size:14.00px;color:#1c1c1f;font-weight:400;transform:scaleX(0.8500);">VAT Rate</div><div class="t" style="left:2824.41px;top:1154.10px;font-size:14.00px;color:#1c1c1f;font-weight:400;transform:scaleX(0.8898);">NET Total</div><div class="t" style="left:2614.20px;top:1176.10px;font-size:14.00px;color:#1c1c1f;font-weight:400;transform:scaleX(0.7611);">(AED)</div><div class="t" style="left:2693.30px;top:1176.10px;font-size:14.00px;color:#1c1c1f;font-weight:400;transform:scaleX(0.7611);">(AED)</div><div class="t" style="left:2767.50px;top:1176.10px;font-size:14.00px;color:#1c1c1f;font-weight:400;transform:scaleX(0.7611);">(AED)</div><div class="t" style="left:2850.50px;top:1176.10px;font-size:14.00px;color:#1c1c1f;font-weight:400;transform:scaleX(0.7611);">(AED)</div><div class="t" style="left:2276.00px;top:1218.50px;font-size:14.00px;color:#111114;font-weight:700;transform:scaleX(0.8816);">HR outsourcing Charge</div><div class="t" style="left:2275.10px;top:1239.40px;font-size:14.00px;color:#8d9bb1;font-weight:400;transform:scaleX(0.9030);">HR &amp; Accounting - January 2023</div><div class="t" style="left:2514.00px;top:1218.50px;font-size:14.00px;color:#111114;font-weight:700;">1</div><div class="t" style="left:2532.80px;top:1218.50px;font-size:14.00px;color:#111114;font-weight:700;transform:scaleX(0.9651);">3,550.00</div><div class="t" style="left:2592.00px;top:1218.50px;font-size:14.00px;color:#111114;font-weight:700;transform:scaleX(0.9651);">3,550.00</div><div class="t" style="left:2707.80px;top:1218.50px;font-size:14.00px;color:#111114;font-weight:700;transform:scaleX(0.8362);">10</div><div class="t" style="left:2753.50px;top:1218.50px;font-size:14.00px;color:#111114;font-weight:700;transform:scaleX(0.9411);">355.00</div><div class="t" style="left:2827.20px;top:1218.50px;font-size:14.00px;color:#111114;font-weight:700;transform:scaleX(0.9651);">3,550.00</div><div style="position:absolute;left:2677.80px;top:1225.30px;width:4.50px;height:1.60px;background:#222226"></div><div style="position:absolute;left:2264.00px;top:1277.50px;width:629.00px;height:1.50px;background:#eef0f3"></div><div class="t" style="left:2659.30px;top:1306.43px;font-size:13.50px;color:#1c1c1f;font-weight:400;transform:scaleX(0.8511);">SUB TOTAL</div><div class="t" style="left:2829.60px;top:1306.43px;font-size:13.50px;color:#1c1c1f;font-weight:400;transform:scaleX(0.9492);">3,550.00</div><div class="t" style="left:2659.30px;top:1327.23px;font-size:13.50px;color:#1c1c1f;font-weight:400;transform:scaleX(0.8480);">VAT TOTAL</div><div class="t" style="left:2840.30px;top:1327.23px;font-size:13.50px;color:#1c1c1f;font-weight:400;transform:scaleX(0.9489);">355.00</div><div class="t" style="left:2659.30px;top:1348.43px;font-size:13.50px;color:#1c1c1f;font-weight:400;transform:scaleX(0.8655);">TOTAL</div><div class="t" style="left:2829.00px;top:1348.43px;font-size:13.50px;color:#1c1c1f;font-weight:400;transform:scaleX(0.9608);">3,905.00</div><div class="t" style="left:2658.46px;top:1369.23px;font-size:13.50px;color:#1c1c1f;font-weight:400;transform:scaleX(0.8445);">PARTIAL PAYMENT</div><div class="t" style="left:2829.00px;top:1369.23px;font-size:13.50px;color:#1c1c1f;font-weight:400;transform:scaleX(0.9608);">2,000.00</div><div class="t" style="left:2658.45px;top:1390.43px;font-size:13.50px;color:#1c1c1f;font-weight:400;transform:scaleX(0.8486);">BALANCE DUE</div><div class="t" style="left:2806.00px;top:1390.43px;font-size:13.50px;color:#1c1c1f;font-weight:400;transform:scaleX(0.8737);">AED 1,905.00</div><div class="t" style="left:2276.00px;top:1498.67px;font-size:14.50px;color:#111114;font-weight:700;transform:scaleX(0.8506);">Terms &amp; Conditions</div><div class="t" style="left:2276.00px;top:1524.08px;font-size:14.50px;color:#1c1c1f;font-weight:400;transform:scaleX(0.8824);">The following terminology applies to these Terms and</div><div class="t" style="left:2276.00px;top:1548.38px;font-size:14.50px;color:#1c1c1f;font-weight:400;transform:scaleX(0.8785);">Conditions, Privacy Statement and Disclaimer Notice</div><div class="t" style="left:2276.00px;top:1573.17px;font-size:14.50px;color:#1c1c1f;font-weight:400;transform:scaleX(0.8633);">and all Agreements: “Client”, “You” and “Your” refers</div><div class="t" style="left:2276.00px;top:1598.27px;font-size:14.50px;color:#1c1c1f;font-weight:400;transform:scaleX(0.8841);">to you, the person log on this website and compliant</div><div class="t" style="left:2276.00px;top:1622.67px;font-size:14.50px;color:#1c1c1f;font-weight:400;transform:scaleX(0.8820);">to the Company’s terms and conditions. “The</div><div class="t" style="left:2276.00px;top:1647.67px;font-size:14.50px;color:#1c1c1f;font-weight:400;transform:scaleX(0.8287);">Company”, “Ourselves”, “We”, “Our” and “Us”.</div><div style="position:absolute;left:2442.00px;top:1787.00px;width:125.00px;height:62.50px;border:2px solid #cbd2dc;border-radius:16px"></div><div style="position:absolute;left:2585.00px;top:1787.00px;width:133.00px;height:62.50px;border:2px solid #cbd2dc;border-radius:16px"></div><div class="t" style="left:2503.14px;top:1805.38px;font-size:27.20px;color:#717c92;font-weight:400;transform:scaleX(0.9315);-webkit-text-stroke:0.30px #717c92;">Mail</div><div class="t" style="left:2645.88px;top:1805.38px;font-size:27.20px;color:#717c92;font-weight:400;transform:scaleX(0.9605);-webkit-text-stroke:0.30px #717c92;">Print</div><svg style="position:absolute;left:0;top:0" width="3066" height="2049" viewBox="0 0 3066 2049"><circle cx="70.0" cy="65.6" r="14.2" fill="#ee6a5f"/><circle cx="117.0" cy="65.6" r="14.2" fill="#f5bf4f"/><circle cx="164.0" cy="65.6" r="14.2" fill="#61c554"/><polyline points="266.2,47.6 248.8,65.6 266.2,83.6" fill="none" stroke="#c9c9c9" stroke-width="3.2" stroke-linecap="round" stroke-linejoin="round"/><polyline points="323.7,47.6 341,65.6 323.7,83.6" fill="none" stroke="#505050" stroke-width="3.2" stroke-linecap="round" stroke-linejoin="round"/><path d="M1319.6 65 V60.5 a5.9 5.9 0 0 1 11.8 0 V65" fill="none" stroke="#fff" stroke-width="2.6"/><rect x="1316" y="64" width="19.2" height="17" rx="2.6" fill="#fff"/><path d="M2148.5 59.8 A13.1 13.1 0 1 1 2140.5 53.1 L2143.3 53.9" fill="none" stroke="#bcbcbc" stroke-width="2.6" stroke-linecap="round"/><polyline points="2137.7,47.5 2144.1,53.9 2137.7,60.2" fill="none" stroke="#bcbcbc" stroke-width="2.6" stroke-linecap="round" stroke-linejoin="round"/><path d="M2885 59.8 H2879.6 a3 3 0 0 0 -3 3 V83.2 a3 3 0 0 0 3 3 H2902.7 a3 3 0 0 0 3 -3 V62.8 a3 3 0 0 0 -3 -3 H2897.5" fill="none" stroke="#bcbcbc" stroke-width="2.6" stroke-linecap="round"/><path d="M2891.3 74.5 V45.5 M2881.9 54.3 L2891.3 45 L2900.7 54.3" fill="none" stroke="#bcbcbc" stroke-width="2.6" stroke-linecap="round" stroke-linejoin="round"/><path d="M2970 65.7 H3000 M2984.9 50.8 V80.6" fill="none" stroke="#bcbcbc" stroke-width="3" stroke-linecap="round"/><defs><linearGradient id="lgb" x1="0" y1="0" x2="1" y2="1"><stop offset="0" stop-color="#2f78bc"/><stop offset="0.55" stop-color="#3a8fcf"/><stop offset="1" stop-color="#58c2ea"/></linearGradient><linearGradient id="lgb2" x1="0" y1="0" x2="1" y2="0"><stop offset="0" stop-color="#3a86c6"/><stop offset="1" stop-color="#5cc6ec"/></linearGradient></defs><defs><linearGradient id="lga" gradientUnits="userSpaceOnUse" x1="37" y1="56.3" x2="25" y2="60"><stop offset="0" stop-color="#5ac4ea"/><stop offset="1" stop-color="#3580c2"/></linearGradient><linearGradient id="lgc" gradientUnits="userSpaceOnUse" x1="41.6" y1="31.2" x2="53.6" y2="43.2"><stop offset="0" stop-color="#2f7abf"/><stop offset="1" stop-color="#58c3ea"/></linearGradient></defs><g transform="translate(38.00 192.00) scale(1.0000)" fill="none" stroke-linecap="round" stroke-linejoin="round" stroke-width="5.80"><path d="M22.6 53.8 L32.3 32.6 Q36 26.2 41.6 31.2" stroke="#2f7abf"/><path d="M37 56.3 L29.5 59.8 Q21.8 62.6 22.6 53.8" stroke="url(#lga)"/><path d="M41.6 31.2 L53.6 43.2" stroke="url(#lgc)"/><path d="M55 29.6 L62 26.6 Q69.8 24.4 67.8 32.2 L59.3 53 Q55.6 60.6 49 55.2 L37.6 44.5" stroke="#2fae62"/></g><path d="M71.5 539 V515.5 a4.6 4.6 0 0 1 9.2 0 V539 M84.8 539 V504.6 a4.6 4.6 0 0 1 9.2 0 V539 M98.2 539 V525.8 a4.6 4.6 0 0 1 9.2 0 V539 M68.6 540.6 H110" stroke="#1a8cff" fill="none" stroke-width="3" stroke-linecap="round" stroke-linejoin="round"/><path d="M88.86 611.70 A19.60 19.60 0 1 0 108.80 631.30" stroke="#a47bef" fill="none" stroke-width="3" stroke-linecap="round" stroke-linejoin="round"/><path d="M109.4 611.10 L98.6 621.90 M98.4 613.80 V622.10 H106.5" stroke="#a47bef" fill="none" stroke-width="3" stroke-linecap="round" stroke-linejoin="round"/><text x="89.20" y="639.70" font-family="Liberation Sans" font-weight="700" font-size="24" fill="#a47bef" stroke="#a47bef" stroke-width="0.6" text-anchor="middle">$</text><path d="M88.86 722.60 A19.60 19.60 0 1 0 108.80 742.20" stroke="#ff7552" fill="none" stroke-width="3" stroke-linecap="round" stroke-linejoin="round"/><path d="M98.6 732.80 L109.4 722.00 M101.5 721.80 H109.6 V729.90" stroke="#ff7552" fill="none" stroke-width="3" stroke-linecap="round" stroke-linejoin="round"/><text x="89.20" y="750.60" font-family="Liberation Sans" font-weight="700" font-size="24" fill="#ff7552" stroke="#ff7552" stroke-width="0.6" text-anchor="middle">$</text><path d="M77.5 833.00 H100.5 a6 6 0 0 1 6 6 V867.50 a6 6 0 0 1 -6 6 H77.5 a6 6 0 0 1 -6 -6 V839.00 a6 6 0 0 1 6 -6 Z M71.5 859.00 H106.5 M80.5 843.50 H98.5 M80.5 850.50 H91.8" stroke="#ffc043" fill="none" stroke-width="3" stroke-linecap="round" stroke-linejoin="round"/><path d="M77.5 942.80 H100.5 a6 6 0 0 1 6 6 V977.30 a6 6 0 0 1 -6 6 H77.5 a6 6 0 0 1 -6 -6 V948.80 a6 6 0 0 1 6 -6 Z M71.5 968.80 H106.5 M80.5 953.30 H98.5 M80.5 960.30 H91.8" stroke="#2fd29b" fill="none" stroke-width="3" stroke-linecap="round" stroke-linejoin="round"/><path d="M89.1 1054.5 L107 1062.2 Q108.6 1063 108.6 1065 V1070 Q108.6 1072 106.6 1072 H71.6 Q69.6 1072 69.6 1070 V1065 Q69.6 1063 71.2 1062.2 Z M73.7 1072 V1085.8 M81.4 1072 V1085.8 M89.3 1072 V1085.8 M97 1072 V1085.8 M104.5 1072 V1085.8 M71.6 1085.8 H106.6 Q108.6 1085.8 108.6 1087.8 V1093.6 M69.6 1093.6 V1087.8 Q69.6 1085.8 71.6 1085.8 M67.2 1093.6 H111" stroke="#0d8bff" fill="none" stroke-width="2.7" stroke-linecap="round" stroke-linejoin="round"/><circle cx="89.1" cy="1064.5" r="3.2" fill="none" stroke="#0d8bff" stroke-width="2.6"/><path d="M75 1173 V1172 a6 6 0 0 1 6 -6 H104 a6 6 0 0 1 6 6 V1191.5 a6 6 0 0 1 -6 6 H102.5" stroke="#8b5cf6" fill="none" stroke-width="3" stroke-linecap="round" stroke-linejoin="round"/><path d="M74.5 1174 H96.4 a6 6 0 0 1 6 6 V1197 a6 6 0 0 1 -6 6 H74.5 a6 6 0 0 1 -6 -6 V1180 a6 6 0 0 1 6 -6 Z M68.5 1186.3 H102.4 M75.2 1196 H80.3 M83.5 1196 H91" stroke="#8b5cf6" fill="none" stroke-width="3" stroke-linecap="round" stroke-linejoin="round"/><polygon points="108.90,1295.60 108.86,1296.64 108.70,1297.66 108.32,1298.64 107.35,1299.48 105.42,1299.97 103.50,1300.28 102.49,1300.74 101.97,1301.33 101.59,1301.96 101.22,1302.60 100.86,1303.23 100.50,1303.88 100.25,1304.63 100.35,1305.73 101.05,1307.55 101.58,1309.47 101.34,1310.72 100.68,1311.54 99.87,1312.19 99.00,1312.75 98.08,1313.23 97.12,1313.60 96.07,1313.76 94.87,1313.34 93.47,1311.92 92.25,1310.41 91.34,1309.77 90.57,1309.62 89.83,1309.60 89.10,1309.60 88.37,1309.60 87.63,1309.62 86.86,1309.77 85.95,1310.41 84.73,1311.92 83.33,1313.34 82.13,1313.76 81.08,1313.60 80.12,1313.23 79.20,1312.75 78.33,1312.19 77.52,1311.54 76.86,1310.72 76.62,1309.47 77.15,1307.55 77.85,1305.73 77.95,1304.63 77.70,1303.88 77.34,1303.23 76.98,1302.60 76.61,1301.96 76.23,1301.33 75.71,1300.74 74.70,1300.28 72.78,1299.97 70.85,1299.48 69.88,1298.64 69.50,1297.66 69.34,1296.64 69.30,1295.60 69.34,1294.56 69.50,1293.54 69.88,1292.56 70.85,1291.72 72.78,1291.23 74.70,1290.92 75.71,1290.46 76.23,1289.87 76.61,1289.24 76.98,1288.60 77.34,1287.97 77.70,1287.32 77.95,1286.57 77.85,1285.47 77.15,1283.65 76.62,1281.73 76.86,1280.48 77.52,1279.66 78.33,1279.01 79.20,1278.45 80.12,1277.97 81.08,1277.60 82.13,1277.44 83.33,1277.86 84.73,1279.28 85.95,1280.79 86.86,1281.43 87.63,1281.58 88.37,1281.60 89.10,1281.60 89.83,1281.60 90.57,1281.58 91.34,1281.43 92.25,1280.79 93.47,1279.28 94.87,1277.86 96.07,1277.44 97.12,1277.60 98.08,1277.97 99.00,1278.45 99.87,1279.01 100.68,1279.66 101.34,1280.48 101.58,1281.73 101.05,1283.65 100.35,1285.47 100.25,1286.57 100.50,1287.32 100.86,1287.97 101.22,1288.60 101.59,1289.24 101.97,1289.87 102.49,1290.46 103.50,1290.92 105.42,1291.23 107.35,1291.72 108.32,1292.56 108.70,1293.54 108.86,1294.56" fill="none" stroke="#f26243" stroke-width="3" stroke-linejoin="round"/><circle cx="89.1" cy="1295.6" r="5.9" fill="none" stroke="#f26243" stroke-width="3"/><circle cx="1815.9" cy="386.6" r="14.3" fill="none" stroke="#5e6a80" stroke-width="3"/><path d="M1828.8 399.2 L1831.8 402.3" fill="none" stroke="#5e6a80" stroke-width="3" stroke-linecap="round"/><path d="M2360 376 H2389 M2360 383.6 H2389 M2360 391.2 H2389 M2360 398.8 H2389" fill="none" stroke="#5e6a80" stroke-width="3" stroke-linecap="round"/><path d="M2549.5 372 H2569.5 a3.3 3.3 0 0 1 3.3 3.3 V379 a5 5 0 0 1 -1.8 3.8 L2565 387.8 a4 4 0 0 0 -1.5 3.2 V398 a3 3 0 0 1 -1.4 2.6 L2560 402 a2.3 2.3 0 0 1 -3.5 -2 V391.8 a4 4 0 0 0 -1.2 -2.8 L2548 381.5 a4.5 4.5 0 0 1 -1.3 -3.2 V375.3 a3.3 3.3 0 0 1 3.3 -3.3 Z M2556.4 372 L2550 382.5" fill="none" stroke="#5e6a80" stroke-width="2.8" stroke-linejoin="round" stroke-linecap="round"/><path d="M978.30 520.6 L985.50 513.4 L992.70 520.6 Z M978.30 528.6 L985.50 536 L992.70 528.6 Z" fill="#c9ced6" stroke="#c9ced6" stroke-width="1.6" stroke-linejoin="round"/><path d="M1311.40 520.6 L1318.60 513.4 L1325.80 520.6 Z M1311.40 528.6 L1318.60 536 L1325.80 528.6 Z" fill="#c9ced6" stroke="#c9ced6" stroke-width="1.6" stroke-linejoin="round"/><path d="M1643.80 520.6 L1651.00 513.4 L1658.20 520.6 Z M1643.80 528.6 L1651.00 536 L1658.20 528.6 Z" fill="#c9ced6" stroke="#c9ced6" stroke-width="1.6" stroke-linejoin="round"/><path d="M1976.30 520.6 L1983.50 513.4 L1990.70 520.6 Z M1976.30 528.6 L1983.50 536 L1990.70 528.6 Z" fill="#c9ced6" stroke="#c9ced6" stroke-width="1.6" stroke-linejoin="round"/><rect x="633.00" y="508.80" width="32.4" height="32.4" rx="7.5" fill="#fff" fill-opacity="0" stroke="#ccd2dc" stroke-width="2.2"/><rect x="633.00" y="603.60" width="32.4" height="32.4" rx="7.5" fill="#fff" fill-opacity="0" stroke="#ccd2dc" stroke-width="2.2"/><path d="M727.5 605.70 H745 a5.5 5.5 0 0 1 5.5 5.5 V630.40 a5.5 5.5 0 0 1 -5.5 5.5 H727.5 a5.5 5.5 0 0 1 -5.5 -5.5 V611.20 a5.5 5.5 0 0 1 5.5 -5.5 Z M722 614.70 H750.5 M729.8 602.60 V608.90 M742.6 602.60 V608.90" fill="none" stroke="#8f9bae" stroke-width="2.3" stroke-linecap="round"/><circle cx="730" cy="622.00" r="1.1" fill="#8f9bae"/><circle cx="736" cy="622.00" r="1.1" fill="#8f9bae"/><circle cx="730" cy="627.20" r="1.1" fill="#8f9bae"/><g><circle cx="1075.30" cy="619.40" r="25.50" fill="#211a16"/><ellipse cx="1078.10" cy="622.90" rx="10.2" ry="15.5" fill="#c2aaa0"/><path d="M1050.70 627.40 A25.50 25.50 0 1 1 1100.20 624.90 L1095.30 622.40 Q1076.30 583.40 1057.30 622.40 Z" fill="#37504a"/><path d="M1074.30 604.40 Q1076.30 620.40 1065.30 629.40" stroke="#1f1713" stroke-width="3.4" fill="none"/><path d="M1066.30 609.40 Q1064.30 627.40 1068.30 635.40" stroke="#211a16" stroke-width="4" fill="none"/><ellipse cx="1071.80" cy="616.40" rx="2.6" ry="1.1" fill="#5a4c45"/><ellipse cx="1082.80" cy="616.40" rx="2.8" ry="1.1" fill="#5a4c45"/><ellipse cx="1076.80" cy="631.40" rx="4.7" ry="1.6" fill="#b0505a"/></g><polyline points="1746.2,619.00 1754,626.60 1767.8,612.00" fill="none" stroke="#1dbf7e" stroke-width="3.2" stroke-linecap="round" stroke-linejoin="round"/><circle cx="2065.4" cy="608.80" r="3.3" fill="none" stroke="#8b96a9" stroke-width="2.1"/><circle cx="2065.4" cy="619.90" r="3.3" fill="none" stroke="#8b96a9" stroke-width="2.1"/><circle cx="2065.4" cy="630.80" r="3.3" fill="none" stroke="#8b96a9" stroke-width="2.1"/><rect x="633.00" y="697.25" width="32.4" height="32.4" rx="7.5" fill="#fff" fill-opacity="0" stroke="#ccd2dc" stroke-width="2.2"/><path d="M727.5 699.35 H745 a5.5 5.5 0 0 1 5.5 5.5 V724.05 a5.5 5.5 0 0 1 -5.5 5.5 H727.5 a5.5 5.5 0 0 1 -5.5 -5.5 V704.85 a5.5 5.5 0 0 1 5.5 -5.5 Z M722 708.35 H750.5 M729.8 696.25 V702.55 M742.6 696.25 V702.55" fill="none" stroke="#8f9bae" stroke-width="2.3" stroke-linecap="round"/><circle cx="730" cy="715.65" r="1.1" fill="#8f9bae"/><circle cx="736" cy="715.65" r="1.1" fill="#8f9bae"/><circle cx="730" cy="720.85" r="1.1" fill="#8f9bae"/><g><circle cx="1075.30" cy="713.05" r="25.50" fill="#211a16"/><ellipse cx="1078.10" cy="716.55" rx="10.2" ry="15.5" fill="#c2aaa0"/><path d="M1050.70 721.05 A25.50 25.50 0 1 1 1100.20 718.55 L1095.30 716.05 Q1076.30 677.05 1057.30 716.05 Z" fill="#37504a"/><path d="M1074.30 698.05 Q1076.30 714.05 1065.30 723.05" stroke="#1f1713" stroke-width="3.4" fill="none"/><path d="M1066.30 703.05 Q1064.30 721.05 1068.30 729.05" stroke="#211a16" stroke-width="4" fill="none"/><ellipse cx="1071.80" cy="710.05" rx="2.6" ry="1.1" fill="#5a4c45"/><ellipse cx="1082.80" cy="710.05" rx="2.8" ry="1.1" fill="#5a4c45"/><ellipse cx="1076.80" cy="725.05" rx="4.7" ry="1.6" fill="#b0505a"/></g><path d="M1763.00 712.95 L1766.60 712.95 M1761.01 717.76 L1763.55 720.30 M1756.20 719.75 L1756.20 723.35 M1751.39 717.76 L1748.85 720.30 M1749.40 712.95 L1745.80 712.95 M1751.39 708.14 L1748.85 705.60 M1756.20 706.15 L1756.20 702.55 M1761.01 708.14 L1763.55 705.60 " stroke="#f9ae2e" stroke-width="2.7" stroke-linecap="round"/><circle cx="2065.4" cy="702.45" r="3.3" fill="none" stroke="#8b96a9" stroke-width="2.1"/><circle cx="2065.4" cy="713.55" r="3.3" fill="none" stroke="#8b96a9" stroke-width="2.1"/><circle cx="2065.4" cy="724.45" r="3.3" fill="none" stroke="#8b96a9" stroke-width="2.1"/><rect x="633.00" y="790.90" width="32.4" height="32.4" rx="7.5" fill="#fff" fill-opacity="0" stroke="#ccd2dc" stroke-width="2.2"/><path d="M727.5 793.00 H745 a5.5 5.5 0 0 1 5.5 5.5 V817.70 a5.5 5.5 0 0 1 -5.5 5.5 H727.5 a5.5 5.5 0 0 1 -5.5 -5.5 V798.50 a5.5 5.5 0 0 1 5.5 -5.5 Z M722 802.00 H750.5 M729.8 789.90 V796.20 M742.6 789.90 V796.20" fill="none" stroke="#8f9bae" stroke-width="2.3" stroke-linecap="round"/><circle cx="730" cy="809.30" r="1.1" fill="#8f9bae"/><circle cx="736" cy="809.30" r="1.1" fill="#8f9bae"/><circle cx="730" cy="814.50" r="1.1" fill="#8f9bae"/><g><circle cx="1075.30" cy="806.70" r="25.50" fill="#211a16"/><ellipse cx="1078.10" cy="810.20" rx="10.2" ry="15.5" fill="#c2aaa0"/><path d="M1050.70 814.70 A25.50 25.50 0 1 1 1100.20 812.20 L1095.30 809.70 Q1076.30 770.70 1057.30 809.70 Z" fill="#37504a"/><path d="M1074.30 791.70 Q1076.30 807.70 1065.30 816.70" stroke="#1f1713" stroke-width="3.4" fill="none"/><path d="M1066.30 796.70 Q1064.30 814.70 1068.30 822.70" stroke="#211a16" stroke-width="4" fill="none"/><ellipse cx="1071.80" cy="803.70" rx="2.6" ry="1.1" fill="#5a4c45"/><ellipse cx="1082.80" cy="803.70" rx="2.8" ry="1.1" fill="#5a4c45"/><ellipse cx="1076.80" cy="818.70" rx="4.7" ry="1.6" fill="#b0505a"/></g><polygon points="1756.20,793.70 1767.98,800.50 1767.98,814.10 1756.20,820.90 1744.42,814.10 1744.42,800.50" fill="none" stroke="#e03c4b" stroke-width="2.8" stroke-linejoin="round"/><path d="M1756.20 800.10 V808.50" stroke="#e03c4b" stroke-width="3" stroke-linecap="round"/><circle cx="1756.20" cy="813.70" r="1.9" fill="#e03c4b"/><circle cx="2065.4" cy="796.10" r="3.3" fill="none" stroke="#8b96a9" stroke-width="2.1"/><circle cx="2065.4" cy="807.20" r="3.3" fill="none" stroke="#8b96a9" stroke-width="2.1"/><circle cx="2065.4" cy="818.10" r="3.3" fill="none" stroke="#8b96a9" stroke-width="2.1"/><rect x="633.00" y="884.55" width="32.4" height="32.4" rx="7.5" fill="#fff" fill-opacity="0" stroke="#ccd2dc" stroke-width="2.2"/><path d="M727.5 886.65 H745 a5.5 5.5 0 0 1 5.5 5.5 V911.35 a5.5 5.5 0 0 1 -5.5 5.5 H727.5 a5.5 5.5 0 0 1 -5.5 -5.5 V892.15 a5.5 5.5 0 0 1 5.5 -5.5 Z M722 895.65 H750.5 M729.8 883.55 V889.85 M742.6 883.55 V889.85" fill="none" stroke="#8f9bae" stroke-width="2.3" stroke-linecap="round"/><circle cx="730" cy="902.95" r="1.1" fill="#8f9bae"/><circle cx="736" cy="902.95" r="1.1" fill="#8f9bae"/><circle cx="730" cy="908.15" r="1.1" fill="#8f9bae"/><g><circle cx="1075.30" cy="900.35" r="25.50" fill="#211a16"/><ellipse cx="1078.10" cy="903.85" rx="10.2" ry="15.5" fill="#c2aaa0"/><path d="M1050.70 908.35 A25.50 25.50 0 1 1 1100.20 905.85 L1095.30 903.35 Q1076.30 864.35 1057.30 903.35 Z" fill="#37504a"/><path d="M1074.30 885.35 Q1076.30 901.35 1065.30 910.35" stroke="#1f1713" stroke-width="3.4" fill="none"/><path d="M1066.30 890.35 Q1064.30 908.35 1068.30 916.35" stroke="#211a16" stroke-width="4" fill="none"/><ellipse cx="1071.80" cy="897.35" rx="2.6" ry="1.1" fill="#5a4c45"/><ellipse cx="1082.80" cy="897.35" rx="2.8" ry="1.1" fill="#5a4c45"/><ellipse cx="1076.80" cy="912.35" rx="4.7" ry="1.6" fill="#b0505a"/></g><polyline points="1746.2,899.95 1754,907.55 1767.8,892.95" fill="none" stroke="#1dbf7e" stroke-width="3.2" stroke-linecap="round" stroke-linejoin="round"/><circle cx="2065.4" cy="889.75" r="3.3" fill="none" stroke="#8b96a9" stroke-width="2.1"/><circle cx="2065.4" cy="900.85" r="3.3" fill="none" stroke="#8b96a9" stroke-width="2.1"/><circle cx="2065.4" cy="911.75" r="3.3" fill="none" stroke="#8b96a9" stroke-width="2.1"/><rect x="633.00" y="978.20" width="32.4" height="32.4" rx="7.5" fill="#fff" fill-opacity="0" stroke="#ccd2dc" stroke-width="2.2"/><path d="M727.5 980.30 H745 a5.5 5.5 0 0 1 5.5 5.5 V1005.00 a5.5 5.5 0 0 1 -5.5 5.5 H727.5 a5.5 5.5 0 0 1 -5.5 -5.5 V985.80 a5.5 5.5 0 0 1 5.5 -5.5 Z M722 989.30 H750.5 M729.8 977.20 V983.50 M742.6 977.20 V983.50" fill="none" stroke="#8f9bae" stroke-width="2.3" stroke-linecap="round"/><circle cx="730" cy="996.60" r="1.1" fill="#8f9bae"/><circle cx="736" cy="996.60" r="1.1" fill="#8f9bae"/><circle cx="730" cy="1001.80" r="1.1" fill="#8f9bae"/><g><circle cx="1075.30" cy="994.00" r="25.50" fill="#211a16"/><ellipse cx="1078.10" cy="997.50" rx="10.2" ry="15.5" fill="#c2aaa0"/><path d="M1050.70 1002.00 A25.50 25.50 0 1 1 1100.20 999.50 L1095.30 997.00 Q1076.30 958.00 1057.30 997.00 Z" fill="#37504a"/><path d="M1074.30 979.00 Q1076.30 995.00 1065.30 1004.00" stroke="#1f1713" stroke-width="3.4" fill="none"/><path d="M1066.30 984.00 Q1064.30 1002.00 1068.30 1010.00" stroke="#211a16" stroke-width="4" fill="none"/><ellipse cx="1071.80" cy="991.00" rx="2.6" ry="1.1" fill="#5a4c45"/><ellipse cx="1082.80" cy="991.00" rx="2.8" ry="1.1" fill="#5a4c45"/><ellipse cx="1076.80" cy="1006.00" rx="4.7" ry="1.6" fill="#b0505a"/></g><polyline points="1746.2,993.60 1754,1001.20 1767.8,986.60" fill="none" stroke="#1dbf7e" stroke-width="3.2" stroke-linecap="round" stroke-linejoin="round"/><circle cx="2065.4" cy="983.40" r="3.3" fill="none" stroke="#8b96a9" stroke-width="2.1"/><circle cx="2065.4" cy="994.50" r="3.3" fill="none" stroke="#8b96a9" stroke-width="2.1"/><circle cx="2065.4" cy="1005.40" r="3.3" fill="none" stroke="#8b96a9" stroke-width="2.1"/><rect x="633.00" y="1071.85" width="32.4" height="32.4" rx="7.5" fill="#fff" fill-opacity="0" stroke="#ccd2dc" stroke-width="2.2"/><path d="M727.5 1073.95 H745 a5.5 5.5 0 0 1 5.5 5.5 V1098.65 a5.5 5.5 0 0 1 -5.5 5.5 H727.5 a5.5 5.5 0 0 1 -5.5 -5.5 V1079.45 a5.5 5.5 0 0 1 5.5 -5.5 Z M722 1082.95 H750.5 M729.8 1070.85 V1077.15 M742.6 1070.85 V1077.15" fill="none" stroke="#8f9bae" stroke-width="2.3" stroke-linecap="round"/><circle cx="730" cy="1090.25" r="1.1" fill="#8f9bae"/><circle cx="736" cy="1090.25" r="1.1" fill="#8f9bae"/><circle cx="730" cy="1095.45" r="1.1" fill="#8f9bae"/><g><circle cx="1075.30" cy="1087.65" r="25.50" fill="#211a16"/><ellipse cx="1078.10" cy="1091.15" rx="10.2" ry="15.5" fill="#c2aaa0"/><path d="M1050.70 1095.65 A25.50 25.50 0 1 1 1100.20 1093.15 L1095.30 1090.65 Q1076.30 1051.65 1057.30 1090.65 Z" fill="#37504a"/><path d="M1074.30 1072.65 Q1076.30 1088.65 1065.30 1097.65" stroke="#1f1713" stroke-width="3.4" fill="none"/><path d="M1066.30 1077.65 Q1064.30 1095.65 1068.30 1103.65" stroke="#211a16" stroke-width="4" fill="none"/><ellipse cx="1071.80" cy="1084.65" rx="2.6" ry="1.1" fill="#5a4c45"/><ellipse cx="1082.80" cy="1084.65" rx="2.8" ry="1.1" fill="#5a4c45"/><ellipse cx="1076.80" cy="1099.65" rx="4.7" ry="1.6" fill="#b0505a"/></g><path d="M1763.00 1087.55 L1766.60 1087.55 M1761.01 1092.36 L1763.55 1094.90 M1756.20 1094.35 L1756.20 1097.95 M1751.39 1092.36 L1748.85 1094.90 M1749.40 1087.55 L1745.80 1087.55 M1751.39 1082.74 L1748.85 1080.20 M1756.20 1080.75 L1756.20 1077.15 M1761.01 1082.74 L1763.55 1080.20 " stroke="#f9ae2e" stroke-width="2.7" stroke-linecap="round"/><circle cx="2065.4" cy="1077.05" r="3.3" fill="none" stroke="#8b96a9" stroke-width="2.1"/><circle cx="2065.4" cy="1088.15" r="3.3" fill="none" stroke="#8b96a9" stroke-width="2.1"/><circle cx="2065.4" cy="1099.05" r="3.3" fill="none" stroke="#8b96a9" stroke-width="2.1"/><rect x="633.00" y="1165.50" width="32.4" height="32.4" rx="7.5" fill="#fff" fill-opacity="0" stroke="#ccd2dc" stroke-width="2.2"/><path d="M727.5 1167.60 H745 a5.5 5.5 0 0 1 5.5 5.5 V1192.30 a5.5 5.5 0 0 1 -5.5 5.5 H727.5 a5.5 5.5 0 0 1 -5.5 -5.5 V1173.10 a5.5 5.5 0 0 1 5.5 -5.5 Z M722 1176.60 H750.5 M729.8 1164.50 V1170.80 M742.6 1164.50 V1170.80" fill="none" stroke="#8f9bae" stroke-width="2.3" stroke-linecap="round"/><circle cx="730" cy="1183.90" r="1.1" fill="#8f9bae"/><circle cx="736" cy="1183.90" r="1.1" fill="#8f9bae"/><circle cx="730" cy="1189.10" r="1.1" fill="#8f9bae"/><g><circle cx="1075.30" cy="1181.30" r="25.50" fill="#211a16"/><ellipse cx="1078.10" cy="1184.80" rx="10.2" ry="15.5" fill="#c2aaa0"/><path d="M1050.70 1189.30 A25.50 25.50 0 1 1 1100.20 1186.80 L1095.30 1184.30 Q1076.30 1145.30 1057.30 1184.30 Z" fill="#37504a"/><path d="M1074.30 1166.30 Q1076.30 1182.30 1065.30 1191.30" stroke="#1f1713" stroke-width="3.4" fill="none"/><path d="M1066.30 1171.30 Q1064.30 1189.30 1068.30 1197.30" stroke="#211a16" stroke-width="4" fill="none"/><ellipse cx="1071.80" cy="1178.30" rx="2.6" ry="1.1" fill="#5a4c45"/><ellipse cx="1082.80" cy="1178.30" rx="2.8" ry="1.1" fill="#5a4c45"/><ellipse cx="1076.80" cy="1193.30" rx="4.7" ry="1.6" fill="#b0505a"/></g><path d="M1763.00 1181.20 L1766.60 1181.20 M1761.01 1186.01 L1763.55 1188.55 M1756.20 1188.00 L1756.20 1191.60 M1751.39 1186.01 L1748.85 1188.55 M1749.40 1181.20 L1745.80 1181.20 M1751.39 1176.39 L1748.85 1173.85 M1756.20 1174.40 L1756.20 1170.80 M1761.01 1176.39 L1763.55 1173.85 " stroke="#f9ae2e" stroke-width="2.7" stroke-linecap="round"/><circle cx="2065.4" cy="1170.70" r="3.3" fill="none" stroke="#8b96a9" stroke-width="2.1"/><circle cx="2065.4" cy="1181.80" r="3.3" fill="none" stroke="#8b96a9" stroke-width="2.1"/><circle cx="2065.4" cy="1192.70" r="3.3" fill="none" stroke="#8b96a9" stroke-width="2.1"/><rect x="633.00" y="1259.15" width="32.4" height="32.4" rx="7.5" fill="#fff" fill-opacity="0" stroke="#ccd2dc" stroke-width="2.2"/><path d="M727.5 1261.25 H745 a5.5 5.5 0 0 1 5.5 5.5 V1285.95 a5.5 5.5 0 0 1 -5.5 5.5 H727.5 a5.5 5.5 0 0 1 -5.5 -5.5 V1266.75 a5.5 5.5 0 0 1 5.5 -5.5 Z M722 1270.25 H750.5 M729.8 1258.15 V1264.45 M742.6 1258.15 V1264.45" fill="none" stroke="#8f9bae" stroke-width="2.3" stroke-linecap="round"/><circle cx="730" cy="1277.55" r="1.1" fill="#8f9bae"/><circle cx="736" cy="1277.55" r="1.1" fill="#8f9bae"/><circle cx="730" cy="1282.75" r="1.1" fill="#8f9bae"/><g><circle cx="1075.30" cy="1274.95" r="25.50" fill="#211a16"/><ellipse cx="1078.10" cy="1278.45" rx="10.2" ry="15.5" fill="#c2aaa0"/><path d="M1050.70 1282.95 A25.50 25.50 0 1 1 1100.20 1280.45 L1095.30 1277.95 Q1076.30 1238.95 1057.30 1277.95 Z" fill="#37504a"/><path d="M1074.30 1259.95 Q1076.30 1275.95 1065.30 1284.95" stroke="#1f1713" stroke-width="3.4" fill="none"/><path d="M1066.30 1264.95 Q1064.30 1282.95 1068.30 1290.95" stroke="#211a16" stroke-width="4" fill="none"/><ellipse cx="1071.80" cy="1271.95" rx="2.6" ry="1.1" fill="#5a4c45"/><ellipse cx="1082.80" cy="1271.95" rx="2.8" ry="1.1" fill="#5a4c45"/><ellipse cx="1076.80" cy="1286.95" rx="4.7" ry="1.6" fill="#b0505a"/></g><polygon points="1756.20,1261.95 1767.98,1268.75 1767.98,1282.35 1756.20,1289.15 1744.42,1282.35 1744.42,1268.75" fill="none" stroke="#e03c4b" stroke-width="2.8" stroke-linejoin="round"/><path d="M1756.20 1268.35 V1276.75" stroke="#e03c4b" stroke-width="3" stroke-linecap="round"/><circle cx="1756.20" cy="1281.95" r="1.9" fill="#e03c4b"/><circle cx="2065.4" cy="1264.35" r="3.3" fill="none" stroke="#8b96a9" stroke-width="2.1"/><circle cx="2065.4" cy="1275.45" r="3.3" fill="none" stroke="#8b96a9" stroke-width="2.1"/><circle cx="2065.4" cy="1286.35" r="3.3" fill="none" stroke="#8b96a9" stroke-width="2.1"/><rect x="633.00" y="1352.80" width="32.4" height="32.4" rx="7.5" fill="#fff" fill-opacity="0" stroke="#ccd2dc" stroke-width="2.2"/><path d="M727.5 1354.90 H745 a5.5 5.5 0 0 1 5.5 5.5 V1379.60 a5.5 5.5 0 0 1 -5.5 5.5 H727.5 a5.5 5.5 0 0 1 -5.5 -5.5 V1360.40 a5.5 5.5 0 0 1 5.5 -5.5 Z M722 1363.90 H750.5 M729.8 1351.80 V1358.10 M742.6 1351.80 V1358.10" fill="none" stroke="#8f9bae" stroke-width="2.3" stroke-linecap="round"/><circle cx="730" cy="1371.20" r="1.1" fill="#8f9bae"/><circle cx="736" cy="1371.20" r="1.1" fill="#8f9bae"/><circle cx="730" cy="1376.40" r="1.1" fill="#8f9bae"/><g><circle cx="1075.30" cy="1368.60" r="25.50" fill="#211a16"/><ellipse cx="1078.10" cy="1372.10" rx="10.2" ry="15.5" fill="#c2aaa0"/><path d="M1050.70 1376.60 A25.50 25.50 0 1 1 1100.20 1374.10 L1095.30 1371.60 Q1076.30 1332.60 1057.30 1371.60 Z" fill="#37504a"/><path d="M1074.30 1353.60 Q1076.30 1369.60 1065.30 1378.60" stroke="#1f1713" stroke-width="3.4" fill="none"/><path d="M1066.30 1358.60 Q1064.30 1376.60 1068.30 1384.60" stroke="#211a16" stroke-width="4" fill="none"/><ellipse cx="1071.80" cy="1365.60" rx="2.6" ry="1.1" fill="#5a4c45"/><ellipse cx="1082.80" cy="1365.60" rx="2.8" ry="1.1" fill="#5a4c45"/><ellipse cx="1076.80" cy="1380.60" rx="4.7" ry="1.6" fill="#b0505a"/></g><polyline points="1746.2,1368.20 1754,1375.80 1767.8,1361.20" fill="none" stroke="#1dbf7e" stroke-width="3.2" stroke-linecap="round" stroke-linejoin="round"/><circle cx="2065.4" cy="1358.00" r="3.3" fill="none" stroke="#8b96a9" stroke-width="2.1"/><circle cx="2065.4" cy="1369.10" r="3.3" fill="none" stroke="#8b96a9" stroke-width="2.1"/><circle cx="2065.4" cy="1380.00" r="3.3" fill="none" stroke="#8b96a9" stroke-width="2.1"/><rect x="633.00" y="1446.45" width="32.4" height="32.4" rx="7.5" fill="#fff" fill-opacity="0" stroke="#ccd2dc" stroke-width="2.2"/><path d="M727.5 1448.55 H745 a5.5 5.5 0 0 1 5.5 5.5 V1473.25 a5.5 5.5 0 0 1 -5.5 5.5 H727.5 a5.5 5.5 0 0 1 -5.5 -5.5 V1454.05 a5.5 5.5 0 0 1 5.5 -5.5 Z M722 1457.55 H750.5 M729.8 1445.45 V1451.75 M742.6 1445.45 V1451.75" fill="none" stroke="#8f9bae" stroke-width="2.3" stroke-linecap="round"/><circle cx="730" cy="1464.85" r="1.1" fill="#8f9bae"/><circle cx="736" cy="1464.85" r="1.1" fill="#8f9bae"/><circle cx="730" cy="1470.05" r="1.1" fill="#8f9bae"/><g><circle cx="1075.30" cy="1462.25" r="25.50" fill="#211a16"/><ellipse cx="1078.10" cy="1465.75" rx="10.2" ry="15.5" fill="#c2aaa0"/><path d="M1050.70 1470.25 A25.50 25.50 0 1 1 1100.20 1467.75 L1095.30 1465.25 Q1076.30 1426.25 1057.30 1465.25 Z" fill="#37504a"/><path d="M1074.30 1447.25 Q1076.30 1463.25 1065.30 1472.25" stroke="#1f1713" stroke-width="3.4" fill="none"/><path d="M1066.30 1452.25 Q1064.30 1470.25 1068.30 1478.25" stroke="#211a16" stroke-width="4" fill="none"/><ellipse cx="1071.80" cy="1459.25" rx="2.6" ry="1.1" fill="#5a4c45"/><ellipse cx="1082.80" cy="1459.25" rx="2.8" ry="1.1" fill="#5a4c45"/><ellipse cx="1076.80" cy="1474.25" rx="4.7" ry="1.6" fill="#b0505a"/></g><path d="M1763.00 1462.15 L1766.60 1462.15 M1761.01 1466.96 L1763.55 1469.50 M1756.20 1468.95 L1756.20 1472.55 M1751.39 1466.96 L1748.85 1469.50 M1749.40 1462.15 L1745.80 1462.15 M1751.39 1457.34 L1748.85 1454.80 M1756.20 1455.35 L1756.20 1451.75 M1761.01 1457.34 L1763.55 1454.80 " stroke="#f9ae2e" stroke-width="2.7" stroke-linecap="round"/><circle cx="2065.4" cy="1451.65" r="3.3" fill="none" stroke="#8b96a9" stroke-width="2.1"/><circle cx="2065.4" cy="1462.75" r="3.3" fill="none" stroke="#8b96a9" stroke-width="2.1"/><circle cx="2065.4" cy="1473.65" r="3.3" fill="none" stroke="#8b96a9" stroke-width="2.1"/><rect x="633.00" y="1540.10" width="32.4" height="32.4" rx="7.5" fill="#fff" fill-opacity="0" stroke="#ccd2dc" stroke-width="2.2"/><path d="M727.5 1542.20 H745 a5.5 5.5 0 0 1 5.5 5.5 V1566.90 a5.5 5.5 0 0 1 -5.5 5.5 H727.5 a5.5 5.5 0 0 1 -5.5 -5.5 V1547.70 a5.5 5.5 0 0 1 5.5 -5.5 Z M722 1551.20 H750.5 M729.8 1539.10 V1545.40 M742.6 1539.10 V1545.40" fill="none" stroke="#8f9bae" stroke-width="2.3" stroke-linecap="round"/><circle cx="730" cy="1558.50" r="1.1" fill="#8f9bae"/><circle cx="736" cy="1558.50" r="1.1" fill="#8f9bae"/><circle cx="730" cy="1563.70" r="1.1" fill="#8f9bae"/><g><circle cx="1075.30" cy="1555.90" r="25.50" fill="#211a16"/><ellipse cx="1078.10" cy="1559.40" rx="10.2" ry="15.5" fill="#c2aaa0"/><path d="M1050.70 1563.90 A25.50 25.50 0 1 1 1100.20 1561.40 L1095.30 1558.90 Q1076.30 1519.90 1057.30 1558.90 Z" fill="#37504a"/><path d="M1074.30 1540.90 Q1076.30 1556.90 1065.30 1565.90" stroke="#1f1713" stroke-width="3.4" fill="none"/><path d="M1066.30 1545.90 Q1064.30 1563.90 1068.30 1571.90" stroke="#211a16" stroke-width="4" fill="none"/><ellipse cx="1071.80" cy="1552.90" rx="2.6" ry="1.1" fill="#5a4c45"/><ellipse cx="1082.80" cy="1552.90" rx="2.8" ry="1.1" fill="#5a4c45"/><ellipse cx="1076.80" cy="1567.90" rx="4.7" ry="1.6" fill="#b0505a"/></g><polygon points="1756.20,1542.90 1767.98,1549.70 1767.98,1563.30 1756.20,1570.10 1744.42,1563.30 1744.42,1549.70" fill="none" stroke="#e03c4b" stroke-width="2.8" stroke-linejoin="round"/><path d="M1756.20 1549.30 V1557.70" stroke="#e03c4b" stroke-width="3" stroke-linecap="round"/><circle cx="1756.20" cy="1562.90" r="1.9" fill="#e03c4b"/><circle cx="2065.4" cy="1545.30" r="3.3" fill="none" stroke="#8b96a9" stroke-width="2.1"/><circle cx="2065.4" cy="1556.40" r="3.3" fill="none" stroke="#8b96a9" stroke-width="2.1"/><circle cx="2065.4" cy="1567.30" r="3.3" fill="none" stroke="#8b96a9" stroke-width="2.1"/><rect x="633.00" y="1633.75" width="32.4" height="32.4" rx="7.5" fill="#fff" fill-opacity="0" stroke="#ccd2dc" stroke-width="2.2"/><path d="M727.5 1635.85 H745 a5.5 5.5 0 0 1 5.5 5.5 V1660.55 a5.5 5.5 0 0 1 -5.5 5.5 H727.5 a5.5 5.5 0 0 1 -5.5 -5.5 V1641.35 a5.5 5.5 0 0 1 5.5 -5.5 Z M722 1644.85 H750.5 M729.8 1632.75 V1639.05 M742.6 1632.75 V1639.05" fill="none" stroke="#8f9bae" stroke-width="2.3" stroke-linecap="round"/><circle cx="730" cy="1652.15" r="1.1" fill="#8f9bae"/><circle cx="736" cy="1652.15" r="1.1" fill="#8f9bae"/><circle cx="730" cy="1657.35" r="1.1" fill="#8f9bae"/><g><circle cx="1075.30" cy="1649.55" r="25.50" fill="#211a16"/><ellipse cx="1078.10" cy="1653.05" rx="10.2" ry="15.5" fill="#c2aaa0"/><path d="M1050.70 1657.55 A25.50 25.50 0 1 1 1100.20 1655.05 L1095.30 1652.55 Q1076.30 1613.55 1057.30 1652.55 Z" fill="#37504a"/><path d="M1074.30 1634.55 Q1076.30 1650.55 1065.30 1659.55" stroke="#1f1713" stroke-width="3.4" fill="none"/><path d="M1066.30 1639.55 Q1064.30 1657.55 1068.30 1665.55" stroke="#211a16" stroke-width="4" fill="none"/><ellipse cx="1071.80" cy="1646.55" rx="2.6" ry="1.1" fill="#5a4c45"/><ellipse cx="1082.80" cy="1646.55" rx="2.8" ry="1.1" fill="#5a4c45"/><ellipse cx="1076.80" cy="1661.55" rx="4.7" ry="1.6" fill="#b0505a"/></g><polygon points="1756.20,1636.55 1767.98,1643.35 1767.98,1656.95 1756.20,1663.75 1744.42,1656.95 1744.42,1643.35" fill="none" stroke="#e03c4b" stroke-width="2.8" stroke-linejoin="round"/><path d="M1756.20 1642.95 V1651.35" stroke="#e03c4b" stroke-width="3" stroke-linecap="round"/><circle cx="1756.20" cy="1656.55" r="1.9" fill="#e03c4b"/><circle cx="2065.4" cy="1638.95" r="3.3" fill="none" stroke="#8b96a9" stroke-width="2.1"/><circle cx="2065.4" cy="1650.05" r="3.3" fill="none" stroke="#8b96a9" stroke-width="2.1"/><circle cx="2065.4" cy="1660.95" r="3.3" fill="none" stroke="#8b96a9" stroke-width="2.1"/><rect x="633.00" y="1727.40" width="32.4" height="32.4" rx="7.5" fill="#fff" fill-opacity="0" stroke="#ccd2dc" stroke-width="2.2"/><path d="M727.5 1729.50 H745 a5.5 5.5 0 0 1 5.5 5.5 V1754.20 a5.5 5.5 0 0 1 -5.5 5.5 H727.5 a5.5 5.5 0 0 1 -5.5 -5.5 V1735.00 a5.5 5.5 0 0 1 5.5 -5.5 Z M722 1738.50 H750.5 M729.8 1726.40 V1732.70 M742.6 1726.40 V1732.70" fill="none" stroke="#8f9bae" stroke-width="2.3" stroke-linecap="round"/><circle cx="730" cy="1745.80" r="1.1" fill="#8f9bae"/><circle cx="736" cy="1745.80" r="1.1" fill="#8f9bae"/><circle cx="730" cy="1751.00" r="1.1" fill="#8f9bae"/><g><circle cx="1075.30" cy="1743.20" r="25.50" fill="#211a16"/><ellipse cx="1078.10" cy="1746.70" rx="10.2" ry="15.5" fill="#c2aaa0"/><path d="M1050.70 1751.20 A25.50 25.50 0 1 1 1100.20 1748.70 L1095.30 1746.20 Q1076.30 1707.20 1057.30 1746.20 Z" fill="#37504a"/><path d="M1074.30 1728.20 Q1076.30 1744.20 1065.30 1753.20" stroke="#1f1713" stroke-width="3.4" fill="none"/><path d="M1066.30 1733.20 Q1064.30 1751.20 1068.30 1759.20" stroke="#211a16" stroke-width="4" fill="none"/><ellipse cx="1071.80" cy="1740.20" rx="2.6" ry="1.1" fill="#5a4c45"/><ellipse cx="1082.80" cy="1740.20" rx="2.8" ry="1.1" fill="#5a4c45"/><ellipse cx="1076.80" cy="1755.20" rx="4.7" ry="1.6" fill="#b0505a"/></g><polyline points="1746.2,1742.80 1754,1750.40 1767.8,1735.80" fill="none" stroke="#1dbf7e" stroke-width="3.2" stroke-linecap="round" stroke-linejoin="round"/><circle cx="2065.4" cy="1732.60" r="3.3" fill="none" stroke="#8b96a9" stroke-width="2.1"/><circle cx="2065.4" cy="1743.70" r="3.3" fill="none" stroke="#8b96a9" stroke-width="2.1"/><circle cx="2065.4" cy="1754.60" r="3.3" fill="none" stroke="#8b96a9" stroke-width="2.1"/><rect x="633.00" y="1821.05" width="32.4" height="32.4" rx="7.5" fill="#fff" fill-opacity="0" stroke="#ccd2dc" stroke-width="2.2"/><path d="M727.5 1823.15 H745 a5.5 5.5 0 0 1 5.5 5.5 V1847.85 a5.5 5.5 0 0 1 -5.5 5.5 H727.5 a5.5 5.5 0 0 1 -5.5 -5.5 V1828.65 a5.5 5.5 0 0 1 5.5 -5.5 Z M722 1832.15 H750.5 M729.8 1820.05 V1826.35 M742.6 1820.05 V1826.35" fill="none" stroke="#8f9bae" stroke-width="2.3" stroke-linecap="round"/><circle cx="730" cy="1839.45" r="1.1" fill="#8f9bae"/><circle cx="736" cy="1839.45" r="1.1" fill="#8f9bae"/><circle cx="730" cy="1844.65" r="1.1" fill="#8f9bae"/><g><circle cx="1075.30" cy="1836.85" r="25.50" fill="#211a16"/><ellipse cx="1078.10" cy="1840.35" rx="10.2" ry="15.5" fill="#c2aaa0"/><path d="M1050.70 1844.85 A25.50 25.50 0 1 1 1100.20 1842.35 L1095.30 1839.85 Q1076.30 1800.85 1057.30 1839.85 Z" fill="#37504a"/><path d="M1074.30 1821.85 Q1076.30 1837.85 1065.30 1846.85" stroke="#1f1713" stroke-width="3.4" fill="none"/><path d="M1066.30 1826.85 Q1064.30 1844.85 1068.30 1852.85" stroke="#211a16" stroke-width="4" fill="none"/><ellipse cx="1071.80" cy="1833.85" rx="2.6" ry="1.1" fill="#5a4c45"/><ellipse cx="1082.80" cy="1833.85" rx="2.8" ry="1.1" fill="#5a4c45"/><ellipse cx="1076.80" cy="1848.85" rx="4.7" ry="1.6" fill="#b0505a"/></g><polyline points="1746.2,1836.45 1754,1844.05 1767.8,1829.45" fill="none" stroke="#1dbf7e" stroke-width="3.2" stroke-linecap="round" stroke-linejoin="round"/><circle cx="2065.4" cy="1826.25" r="3.3" fill="none" stroke="#8b96a9" stroke-width="2.1"/><circle cx="2065.4" cy="1837.35" r="3.3" fill="none" stroke="#8b96a9" stroke-width="2.1"/><circle cx="2065.4" cy="1848.25" r="3.3" fill="none" stroke="#8b96a9" stroke-width="2.1"/><g transform="translate(2717.76 713.51) scale(0.9300)" fill="none" stroke-linecap="round" stroke-linejoin="round" stroke-width="5.20"><path d="M22.6 53.8 L32.3 32.6 Q36 26.2 41.6 31.2" stroke="#2f7abf"/><path d="M37 56.3 L29.5 59.8 Q21.8 62.6 22.6 53.8" stroke="url(#lga)"/><path d="M41.6 31.2 L53.6 43.2" stroke="url(#lgc)"/><path d="M55 29.6 L62 26.6 Q69.8 24.4 67.8 32.2 L59.3 53 Q55.6 60.6 49 55.2 L37.6 44.5" stroke="#2fae62"/></g><path d="M2465.5 1812.3 Q2461 1815.6 2466 1817.8 L2473 1821 L2476.2 1829 Q2478.8 1834.8 2481.6 1829.4 L2489.6 1809.4 Q2491.2 1804.6 2486.5 1805.6 Z M2473 1821 L2479.4 1814.7" fill="none" stroke="#757a83" stroke-width="2.4" stroke-linejoin="round" stroke-linecap="round"/><path d="M2612 1811.5 V1807 a4 4 0 0 1 4 -4 H2624 a4 4 0 0 1 4 4 V1811.5 M2612 1828 H2609 a4 4 0 0 1 -4 -4 V1815.5 a4 4 0 0 1 4 -4 H2631 a4 4 0 0 1 4 4 V1824 a4 4 0 0 1 -4 4 H2628 M2612 1823 H2628 V1830 a3.5 3.5 0 0 1 -3.5 3.5 H2615.5 a3.5 3.5 0 0 1 -3.5 -3.5 Z M2611.5 1817.5 H2616" fill="none" stroke="#757a83" stroke-width="2.4" stroke-linejoin="round" stroke-linecap="round"/></svg></body></html>
